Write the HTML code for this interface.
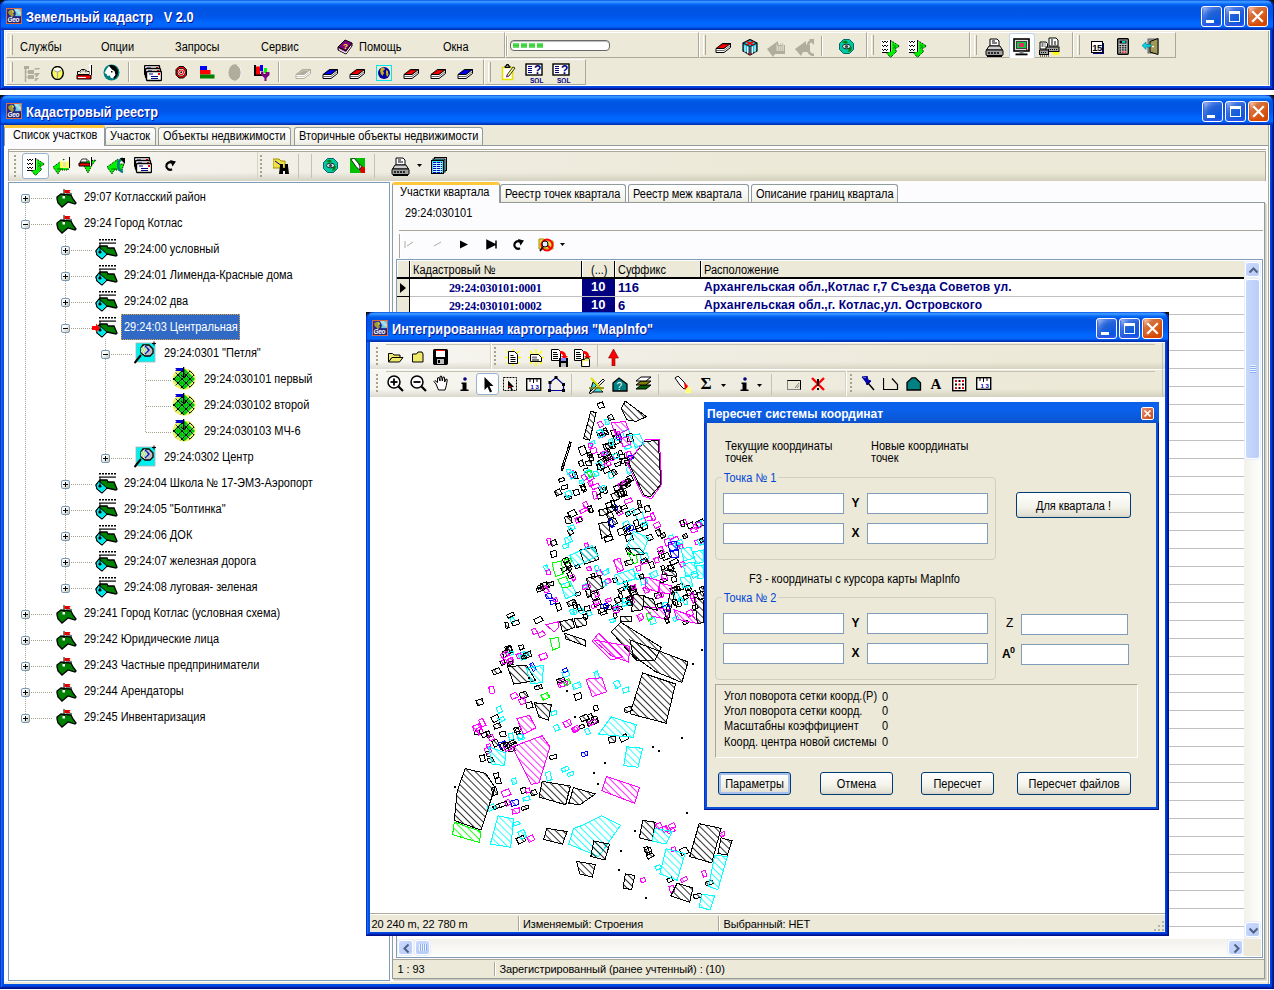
<!DOCTYPE html><html lang="ru"><head><meta charset="utf-8"><title>Земельный кадастр</title><style>
*{box-sizing:border-box;margin:0;padding:0}
html,body{width:1274px;height:990px;overflow:hidden;background:#fff}
body{position:relative;font-family:"Liberation Sans",sans-serif;font-size:12px;color:#000}
div,span,svg{position:absolute}
span{white-space:pre;line-height:14px}
.t{font-size:12.5px;letter-spacing:0;transform:scaleX(.88);transform-origin:0 0}
.n{font-size:12px;letter-spacing:0}
.th{font-size:11px;letter-spacing:-0.1px}
.win{background:#0054e3;border-radius:8px 8px 0 0;
 box-shadow:inset -1px -1px #00138c,inset 1px 1px #0831d9,inset -2px -2px #001ea0,inset 2px 2px #166aee,inset -3px -3px #003bda,inset 3px 3px #0855dd,inset -4px -4px #0046e0,inset 4px 4px #0050e6;}
.tb{left:0;top:0;right:0;height:30px;border-radius:8px 8px 0 0;
 background:linear-gradient(to bottom,#0046e0 0%,#3a95ff 4%,#3391ff 8%,#0a6dfb 13%,#0058e6 20%,#0054e3 30%,#0056e8 55%,#005ef5 65%,#0068ff 75%,#0066fc 88%,#0050e0 93%,#0038c0 96%,#002ea8 100%);
 box-shadow:inset 1px 0 #0831d9, inset -1px 0 #00138c}
.ttl{color:#fff;font-weight:bold;font-size:15px;letter-spacing:0;text-shadow:1px 1px #0f1089;line-height:16px;transform:scaleX(.85);transform-origin:0 0}
.cb{width:21px;height:21px;border:1px solid #fff;border-radius:3px;
 background:radial-gradient(circle at 90% 90%,#0054e9 0%,#2263d5 55%,#4479e4 70%,#a3bbec 90%,#fff 100%);
 box-shadow:inset 0 -1px 2px 1px #2f55e8}
.cb.x{background:radial-gradient(circle at 90% 90%,#cc4600 0%,#dc6527 55%,#cd7546 70%,#ffccb2 90%,#fff 100%);box-shadow:inset 0 -1px 2px 1px #da4600}
.bev{border:1px solid;border-color:#fff #aca899 #aca899 #fff}
.grip{width:3px;border-left:1px solid #fff;border-right:1px solid #aca899;background:#ece9d8}
.vsep{width:2px;border-left:1px solid #aca899;border-right:1px solid #fff}
.dgrip{width:3px;background-image:radial-gradient(circle at 1px 1px,#a5a28f 1px,transparent 1.2px);background-size:3px 4px}
.tab{border:1px solid #919b9c;border-bottom:none;border-radius:3px 3px 0 0;background:linear-gradient(#fff,#f3f3ee 80%,#ece9d8)}
.tab.on{background:#fcfcfe;border-top:3px solid #ffc73c;border-radius:3px 3px 0 0}
.inp{background:#fff;border:1px solid #7f9db9}
.btn{border:1px solid #003c74;border-radius:3px;background:linear-gradient(#fff 0%,#f3f2ea 60%,#e3e1d4 90%,#d6d0c5 100%)}
.btn span{left:0;right:0;text-align:center;transform-origin:50% 0}
</style></head><body><div style="left:0px;top:0px;width:6px;height:6px;background:#101010"></div><div style="left:1268px;top:0px;width:6px;height:6px;background:#101010"></div><div style="left:0px;top:95px;width:6px;height:6px;background:#101010"></div><div style="left:1268px;top:95px;width:6px;height:6px;background:#101010"></div><div class="win" style="left:0px;top:0px;width:1274px;height:90px;"><div class="tb"></div><svg style="left:6px;top:8px;" width="16" height="16" viewBox="0 0 16 16"><rect x="0" y="0" width="16" height="16" fill="#d86848"/><rect x="1" y="1" width="14" height="14" fill="#2838a8"/><rect x="8" y="1" width="7" height="7" fill="#70c8d8"/><path d="M9 1h3l1 2l2 1v3l-3-1l-1-2l-2-1z" fill="#a8e0e8"/><circle cx="5.500" cy="5.500" r="4.300" fill="#1c2890"/><path d="M3 2.500l3-1l2 1.500l-1 2l1 2l-2 2.500l-1.500-2l-1.500-1l-1-2z" fill="#a89830"/><path d="M6 2l2 1.500l-.5 1.500l-1.500-.5z" fill="#d8c848"/><rect x="1" y="9" width="14" height="6" fill="#202878"/><text x="1.500" y="14.200" font-family="Liberation Sans,sans-serif" font-size="6.500" font-weight="bold" font-style="italic" fill="#fff" letter-spacing="-.3">Geo</text></svg><span class="ttl" style="left:26px;top:9px;">Земельный кадастр   V 2.0</span><div class="cb" style="left:1201px;top:6px;width:21px;height:21px;"><div style="left:4px;top:13px;width:8px;height:3px;background:#fff"></div></div><div class="cb" style="left:1224px;top:6px;width:21px;height:21px;"><div style="left:4px;top:4px;width:11px;height:11px;border:1px solid #fff;border-top-width:3px"></div></div><div class="cb x" style="left:1247px;top:6px;width:21px;height:21px;"><svg style="left:0;top:0" width="19" height="19"><path d="M5 5L14 14M14 5L5 14" stroke="#fff" stroke-width="2.200" stroke-linecap="square"/></svg></div><div style="left:4px;top:30px;width:1266px;height:56px;background:#ece9d8;border-top:1px solid #fff;border-left:1px solid #fff;border-bottom:1px solid #fff;box-shadow:inset -1px 0 #fff,inset -2px 0 #aca899"></div><div class="bev" style="left:6px;top:32px;width:499px;height:26px;"></div><div class="grip" style="left:10px;top:35px;width:3px;height:20px;"></div><div class="bev" style="left:505px;top:32px;width:194px;height:26px;"></div><div class="vsep" style="left:506px;top:36px;width:2px;height:20px;"></div><div class="bev" style="left:699px;top:32px;width:168px;height:26px;"></div><div class="grip" style="left:703px;top:35px;width:3px;height:20px;"></div><div class="bev" style="left:867px;top:32px;width:103px;height:26px;"></div><div class="grip" style="left:871px;top:35px;width:3px;height:20px;"></div><div class="bev" style="left:970px;top:32px;width:103px;height:26px;"></div><div class="grip" style="left:974px;top:35px;width:3px;height:20px;"></div><div class="bev" style="left:1073px;top:32px;width:103px;height:26px;"></div><div class="grip" style="left:1077px;top:35px;width:3px;height:20px;"></div><span class="t" style="left:19.6px;top:40px;">Службы</span><span class="t" style="left:100.5px;top:40px;">Опции</span><span class="t" style="left:175px;top:40px;">Запросы</span><span class="t" style="left:261.3px;top:40px;">Сервис</span><span class="t" style="left:359.4px;top:40px;">Помощь</span><span class="t" style="left:443.4px;top:40px;">Окна</span><svg style="left:337px;top:39px;" width="16" height="16" viewBox="0 0 16 16"><path d="M1 8L8 1l7 3l-6 8z" fill="#800080" stroke="#000" stroke-width="1"/><path d="M1 8v3l8 4l6-8V4l-6 8z" fill="#c060c0" stroke="#000" stroke-width="1"/><path d="M2 10.500l7 3.500l5-7" stroke="#fff" stroke-width="1" fill="none"/><text x="6" y="9.500" font-family="Liberation Sans,sans-serif" font-weight="bold" font-size="8" fill="#ff0">?</text></svg><div style="left:510px;top:40px;width:100px;height:11px;"><div style="left:0;top:0;width:100px;height:11px;border:1px solid #686868;border-radius:4px;background:#fff;box-shadow:inset 0 1px 1px #bbb"></div><div style="left:3px;top:3px;width:6px;height:5px;background:linear-gradient(#7be47b,#2ed12e 50%,#7be47b)"></div><div style="left:11px;top:3px;width:6px;height:5px;background:linear-gradient(#7be47b,#2ed12e 50%,#7be47b)"></div><div style="left:19px;top:3px;width:6px;height:5px;background:linear-gradient(#7be47b,#2ed12e 50%,#7be47b)"></div><div style="left:27px;top:3px;width:6px;height:5px;background:linear-gradient(#7be47b,#2ed12e 50%,#7be47b)"></div></div><svg style="left:715px;top:42px;" width="17" height="12" viewBox="0 0 17 12"><path d="M1 6.500L7.500 1.500H15.500L9 6.500Z" fill="#ff0000" stroke="#000" stroke-width="1"/><path d="M1 6.500V10.500H9L15.500 5.500V1.500L9 6.500Z" fill="#fff" stroke="#000" stroke-width="1"/><path d="M1.500 8.500H9L15.500 3.500" fill="none" stroke="#000" stroke-width=".6"/><path d="M3.500 5.500L8 2.500H13.500" fill="none" stroke="#a80000" stroke-width="1"/></svg><svg style="left:742px;top:39px;" width="16" height="17" viewBox="0 0 16 17"><path d="M8 .5l7 3.500v8l-7 4l-7-4v-8z" fill="#00c8e8" stroke="#000" stroke-width="1.200"/><path d="M1 4l7 3.500l7-3.500M8 7.500V16" stroke="#000" stroke-width="1" fill="none"/><path d="M3 6.500v7M5.500 7.500v7M10.500 7.500v7M13 6.500v7" stroke="#fff" stroke-width="1"/><path d="M4.500 2.500l7 3.500M11.500 2.500l-7 3.500" stroke="#f00" stroke-width="1.500"/><path d="M8 7.500V16" stroke="#f00" stroke-width="1.500"/></svg><svg style="left:767px;top:38px;" width="20" height="19" viewBox="0 0 20 19"><path d="M0 11L11 3v4h7v9H8l-2 3z" fill="#b0ad9c"/><path d="M9 5l2 3h4l2-3v8H9z" fill="#d8d5c8"/><path d="M9 6h8M9 8h8M9 10h8M9 12h8" stroke="#b0ad9c" stroke-width="1" stroke-dasharray="1 1"/></svg><svg style="left:795px;top:38px;" width="20" height="19" viewBox="0 0 20 19"><path d="M0 11L11 3v4h4v7H8l-2 4z" fill="#b0ad9c"/><path d="M19 2A6.500 7.500 0 0 0 19 17" fill="none" stroke="#b0ad9c" stroke-width="2.600"/><path d="M14 1h5v6l-3-3z" fill="#b0ad9c"/></svg><div class="vsep" style="left:821px;top:36px;width:2px;height:20px;"></div><svg style="left:838.5px;top:39px;" width="15" height="15" viewBox="0 0 15 15"><path d="M4.500 .5h6l4 4v6l-4 4h-6l-4-4v-6z" fill="#00c8a0" stroke="#006868" stroke-width="1"/><path d="M3 3l4-1.500l2 2l-3 1zM10 9l3-1l-1 4l-3 1z" fill="#008000"/><ellipse cx="7.500" cy="7.500" rx="4" ry="2.300" fill="#c8f0f0" stroke="#000" stroke-width=".8"/><circle cx="7.500" cy="7.500" r="1.600" fill="#404040"/></svg><svg style="left:881px;top:38px;" width="20" height="20" viewBox="0 0 20 20"><rect x="0" y="2" width="9" height="12" fill="#fff"/><path d="M1 3.5h7" stroke="#000" stroke-width="1" stroke-dasharray="1 1 2 1"/><path d="M2 4.5h6" stroke="#000" stroke-width="1" stroke-dasharray="1 2"/><path d="M1 7.5h7" stroke="#000" stroke-width="1" stroke-dasharray="1 1 2 1"/><path d="M2 8.5h6" stroke="#000" stroke-width="1" stroke-dasharray="1 2"/><path d="M1 11.5h7" stroke="#000" stroke-width="1" stroke-dasharray="1 1 2 1"/><path d="M2 12.5h6" stroke="#000" stroke-width="1" stroke-dasharray="1 2"/><path d="M9.500 2v12M1 14.500h9" stroke="#000" stroke-width="1"/><path d="M10.500 3L18.500 8L13.500 11.500L16 13L9.500 19.500L5.500 15L10.500 13.500Z" fill="#00f000"/><path d="M10.500 3L18.500 8L13.500 11.500L16 13L9.500 19.500L5.500 15" fill="none" stroke="#000" stroke-width="1" stroke-dasharray="1 1"/><path d="M12 7l3 1.500l-3 2" stroke="#008000" stroke-width="1" fill="none"/></svg><svg style="left:908px;top:38px;" width="20" height="20" viewBox="0 0 20 20"><rect x="0" y="2" width="9" height="12" fill="#fff"/><path d="M1 3.5h7" stroke="#000" stroke-width="1" stroke-dasharray="1 1 2 1"/><path d="M2 4.5h6" stroke="#000" stroke-width="1" stroke-dasharray="1 2"/><path d="M1 7.5h7" stroke="#000" stroke-width="1" stroke-dasharray="1 1 2 1"/><path d="M2 8.5h6" stroke="#000" stroke-width="1" stroke-dasharray="1 2"/><path d="M1 11.5h7" stroke="#000" stroke-width="1" stroke-dasharray="1 1 2 1"/><path d="M2 12.5h6" stroke="#000" stroke-width="1" stroke-dasharray="1 2"/><path d="M9.500 2v12M1 14.500h9" stroke="#000" stroke-width="1"/><path d="M10.500 3L18.500 8L13.500 11.500L16 13L9.500 19.500L5.500 15L10.500 13.500Z" fill="#00f000"/><path d="M10.500 3L18.500 8L13.500 11.500L16 13L9.500 19.500L5.500 15" fill="none" stroke="#000" stroke-width="1" stroke-dasharray="1 1"/><path d="M12 7l3 1.500l-3 2" stroke="#008000" stroke-width="1" fill="none"/></svg><svg style="left:984.5px;top:38px;" width="19" height="19" viewBox="0 0 19 19"><path d="M5 1h7l2 2v5H5z" fill="#fff" stroke="#000" stroke-width="1"/><path d="M7 3h3M7 5h5" stroke="#000" stroke-width="1"/><path d="M1.500 12L4 8h11l2.500 4z" fill="#d0d0d0" stroke="#000" stroke-width="1"/><rect x="1" y="12" width="17" height="5.500" rx="1" fill="#a0a0a0" stroke="#000" stroke-width="1"/><path d="M3 15h11" stroke="#000" stroke-width="1.500" stroke-dasharray="2 1"/><path d="M2 18.500h15" stroke="#000" stroke-width="1"/></svg><div style="left:1009px;top:33px;width:26px;height:25px;background:#fff;border:1px solid #c1d2ee;border-bottom:none;border-radius:3px 3px 0 0"></div><svg style="left:1013px;top:38px;" width="17" height="18" viewBox="0 0 17 18"><rect x="1" y="1" width="15" height="12" fill="#e0e0e0" stroke="#000" stroke-width="1.600"/><rect x="3.500" y="3.500" width="10" height="7" fill="#00d040" stroke="#404040" stroke-width="1"/><rect x="6" y="5" width="5" height="4" fill="#e03060"/><rect x="6.500" y="13.500" width="4" height="2" fill="#808080"/><rect x="2.500" y="15.500" width="12" height="1.800" fill="#000"/><rect x="13" y="11" width="1.500" height="1" fill="#f00"/></svg><svg style="left:1039px;top:37px;" width="21" height="20" viewBox="0 0 21 20"><path d="M10 1h7l2 2v6h-9z" fill="#fff" stroke="#000" stroke-width="1"/><path d="M12 3h3M12 5h5M12 7h5" stroke="#000" stroke-width="1" stroke-dasharray="2 1"/><path d="M1 5h6l1.500 1.500V12H1z" fill="#fff" stroke="#000" stroke-width="1"/><path d="M2.500 7h4M2.500 9h4" stroke="#000" stroke-width="1" stroke-dasharray="2 1"/><rect x="7" y="10" width="13" height="4.500" fill="#a0a0a0" stroke="#000" stroke-width="1"/><path d="M9 12.500h9" stroke="#000" stroke-width="1" stroke-dasharray="1 1"/><rect x="0.500" y="13" width="9" height="4.500" fill="#a0a0a0" stroke="#000" stroke-width="1"/><path d="M2 15.500h6M1 19h9" stroke="#000" stroke-width="1" stroke-dasharray="1 1"/><path d="M13 15h7v4l-3-2l-2 2z" fill="#ffff00"/></svg><svg style="left:1091px;top:40.5px;" width="13" height="13" viewBox="0 0 13 13"><rect x="2" y="2" width="11" height="11" fill="#000080"/><rect x=".5" y=".5" width="11" height="11" fill="#fff" stroke="#000" stroke-width="1"/><text x="1.300" y="10" font-family="Liberation Sans,sans-serif" font-weight="bold" font-size="9.500" letter-spacing="-.6" fill="#000">15</text></svg><svg style="left:1117px;top:38px;" width="12" height="17" viewBox="0 0 12 17"><rect x=".7" y=".7" width="10.600" height="15.600" rx="1" fill="#c0c0c0" stroke="#000" stroke-width="1.400"/><rect x="2.500" y="2.500" width="7" height="3" fill="#000"/><rect x="5" y="3.200" width="3.500" height="1.500" fill="#0ff"/><rect x="2.5" y="7.0" width="1.600" height="1.200" fill="#000"/><rect x="5.1" y="7.0" width="1.600" height="1.200" fill="#000"/><rect x="7.7" y="7.0" width="1.600" height="1.200" fill="#000"/><rect x="2.5" y="9.2" width="1.600" height="1.200" fill="#000"/><rect x="5.1" y="9.2" width="1.600" height="1.200" fill="#000"/><rect x="7.7" y="9.2" width="1.600" height="1.200" fill="#000"/><rect x="2.5" y="11.4" width="1.600" height="1.200" fill="#000"/><rect x="5.1" y="11.4" width="1.600" height="1.200" fill="#000"/><rect x="7.7" y="11.4" width="1.600" height="1.200" fill="#000"/><rect x="2.5" y="13.600000000000001" width="1.600" height="1.200" fill="#000"/><rect x="5.1" y="13.600000000000001" width="1.600" height="1.200" fill="#f00"/><rect x="7.7" y="13.600000000000001" width="1.600" height="1.200" fill="#f00"/></svg><svg style="left:1142px;top:38px;" width="18" height="17" viewBox="0 0 18 17"><rect x="6" y="1" width="10" height="14" fill="#a0a0a0" stroke="#606060" stroke-width="1"/><path d="M8 3.500l8-3v16l-8-2.500z" fill="#a09858" stroke="#000" stroke-width="1"/><path d="M0 7.500l4-3.500v2.500h5v2.500H4v2.500z" fill="#00d8e8" stroke="#007080" stroke-width=".6"/><rect x="10" y="8" width="2" height="1.200" fill="#fff"/></svg><div class="bev" style="left:6px;top:59px;width:478px;height:26px;"></div><div class="grip" style="left:10px;top:62px;width:3px;height:20px;"></div><div class="bev" style="left:484px;top:59px;width:102px;height:26px;"></div><div class="grip" style="left:488px;top:62px;width:3px;height:20px;"></div><svg style="left:22.5px;top:65.5px;" width="18" height="17" viewBox="0 0 18 17"><path d="M2.5 1v15" stroke="#b0ad9c" stroke-width="1.5"/><rect x="1" y="0" width="5" height="3" fill="#b0ad9c"/><path d="M3 6h6M3 11h6" stroke="#b0ad9c" stroke-width="1"/><rect x="5" y="4" width="6" height="4" fill="#b0ad9c"/><rect x="5" y="9" width="6" height="4" fill="#b0ad9c"/><path d="M12 2h5l-1 1.5h-5zM12 7h5l-3 4h-2l1-2h-2zM12 12h4l-3 3h-2l1.500-1.500h-1z" fill="#b0ad9c"/></svg><svg style="left:50.5px;top:65.5px;" width="13" height="14" viewBox="0 0 13 14"><ellipse cx="6.500" cy="7" rx="5.800" ry="6.500" fill="#f8f860" stroke="#000" stroke-width="1.4"/><ellipse cx="6.500" cy="3.500" rx="3.800" ry="1.800" fill="#fff"/><path d="M3 4.500l3.500 1.500l3.500-1.500M6.500 6v6" stroke="#b0ad9c" stroke-width="1.200" fill="none"/></svg><svg style="left:75.5px;top:64px;" width="16" height="16" viewBox="0 0 16 16"><path d="M1 11h14v4H1z" fill="#f00" stroke="#000" stroke-width="1"/><rect x="2" y="13" width="8" height="1" fill="#fff"/><path d="M1.500 10.500V7.500h2l2-2h3l3 2h2v3z" fill="#ece9d8" stroke="#000" stroke-width="1"/><path d="M4 8.500l3-2l4 2" stroke="#000" stroke-width=".8" fill="none" stroke-dasharray="1 1"/><path d="M13 2l1.500-1.500V11" stroke="#fff" stroke-width="2" fill="none"/><path d="M15.500 1v10" stroke="#000" stroke-width="1"/></svg><svg style="left:102.5px;top:63.5px;" width="17" height="17" viewBox="0 0 17 17"><circle cx="8.500" cy="8.500" r="8" fill="#008080"/><path d="M6 1.500C10 0 15.500 3 15 9c-.5 3-2 5-4 6l-1-5l-3-4z" fill="#000"/><path d="M6 2l3 3.500l2.500 1.500l1 4l-3 3.500l-2-1l-.5-2l-2.500.5l-1-2l-2-1l1.500-3z" fill="#fff"/><rect x="8" y="7" width="1.500" height="1.500" fill="#000"/></svg><div class="vsep" style="left:128px;top:62px;width:2px;height:20px;"></div><svg style="left:144px;top:64.5px;" width="18" height="17" viewBox="0 0 18 17"><rect x="0.5" y="0.5" width="15" height="9" rx="1" fill="#fff" stroke="#000" stroke-width="1.4"/><rect x="3" y="2.5" width="4" height="1" fill="#000080"/><rect x="12" y="2" width="2" height="2" fill="#f00"/><rect x="1.5" y="3.5" width="15" height="9" rx="1" fill="#fff" stroke="#000" stroke-width="1.4"/><rect x="4" y="5.5" width="4" height="1" fill="#000080"/><rect x="13" y="5" width="2" height="2" fill="#f00"/><rect x="2.5" y="6.5" width="15" height="9" rx="1" fill="#fff" stroke="#000" stroke-width="1.4"/><rect x="5" y="8.5" width="4" height="1" fill="#000080"/><rect x="14" y="8" width="2" height="2" fill="#f00"/><rect x="7" y="11" width="7" height="1" fill="#000080"/><rect x="7" y="13" width="7" height="1" fill="#000080"/></svg><svg style="left:174.5px;top:66px;" width="13" height="13" viewBox="0 0 13 13"><path d="M4 .5h4.500l3 3v5.500l-3 3H4l-3-3V3.500z" fill="#f00" stroke="#000" stroke-width="1"/><circle cx="6.200" cy="6.200" r="4.300" fill="#000"/><circle cx="6.200" cy="6.200" r="3.500" fill="#fff"/><circle cx="6.200" cy="6.200" r="2.800" fill="#f00"/><circle cx="6.200" cy="6.200" r="1.800" fill="#fff"/><circle cx="6.200" cy="6.200" r="1" fill="#000"/></svg><svg style="left:199.7px;top:66.3px;" width="15" height="13" viewBox="0 0 15 13"><rect x="0" y="0" width="7" height="4" fill="#00f"/><rect x="0" y="4" width="10.500" height="4.500" fill="#f00"/><rect x="0" y="8.500" width="14.500" height="4" fill="#008000"/></svg><svg style="left:227.5px;top:64px;" width="15" height="18" viewBox="0 0 15 18"><ellipse cx="7" cy="8.500" rx="6.500" ry="8.300" fill="#b0ad9c"/><path d="M9 1a7 8.500 0 0 1 0 15.500" stroke="#fff" stroke-width="1" fill="none"/></svg><svg style="left:253.7px;top:64.7px;" width="16" height="17" viewBox="0 0 16 17"><rect x="0" y="0" width="2" height="10" fill="#000"/><rect x="0" y="9" width="12" height="2" fill="#000"/><rect x="2" y="1.500" width="4" height="8" fill="#f00"/><rect x="6" y="0" width="3" height="6" fill="#00f"/><rect x="10" y="3" width="3" height="5" fill="#0f0"/><path d="M7 6.500h2.500v3h2V7h4v3l-3 3v3h-2v-3l-3.500-3z" fill="#800080"/></svg><div class="vsep" style="left:278px;top:62px;width:2px;height:20px;"></div><svg style="left:295px;top:68px;" width="17" height="12" viewBox="0 0 17 12"><path d="M1 6.500L7.500 1.500H15.500L9 6.500Z" fill="#b0ad9c" stroke="#b0ad9c" stroke-width="1"/><path d="M1 6.500V10.500H9L15.500 5.500V1.500L9 6.500Z" fill="#fff" stroke="#b0ad9c" stroke-width="1"/><path d="M1.500 8.500H9L15.500 3.500" fill="none" stroke="#b0ad9c" stroke-width=".6"/><path d="M3.500 5.500L8 2.500H13.500" fill="none" stroke="#c8c5b8" stroke-width="1"/></svg><svg style="left:321.5px;top:68px;" width="17" height="12" viewBox="0 0 17 12"><path d="M1 6.500L7.500 1.500H15.500L9 6.500Z" fill="#0000ff" stroke="#000" stroke-width="1"/><path d="M1 6.500V10.500H9L15.500 5.500V1.500L9 6.500Z" fill="#fff" stroke="#000" stroke-width="1"/><path d="M1.500 8.500H9L15.500 3.500" fill="none" stroke="#000" stroke-width=".6"/><path d="M3.500 5.500L8 2.500H13.500" fill="none" stroke="#0000a8" stroke-width="1"/></svg><svg style="left:348.5px;top:68px;" width="17" height="12" viewBox="0 0 17 12"><path d="M1 6.500L7.500 1.500H15.500L9 6.500Z" fill="#ff0000" stroke="#000" stroke-width="1"/><path d="M1 6.500V10.500H9L15.500 5.500V1.500L9 6.500Z" fill="#fff" stroke="#000" stroke-width="1"/><path d="M1.500 8.500H9L15.500 3.500" fill="none" stroke="#000" stroke-width=".6"/><path d="M3.500 5.500L8 2.500H13.500" fill="none" stroke="#a80000" stroke-width="1"/></svg><svg style="left:402.5px;top:68px;" width="17" height="12" viewBox="0 0 17 12"><path d="M1 6.500L7.500 1.500H15.500L9 6.500Z" fill="#ff0000" stroke="#000" stroke-width="1"/><path d="M1 6.500V10.500H9L15.500 5.500V1.500L9 6.500Z" fill="#fff" stroke="#000" stroke-width="1"/><path d="M1.500 8.500H9L15.500 3.500" fill="none" stroke="#000" stroke-width=".6"/><path d="M3.500 5.500L8 2.500H13.500" fill="none" stroke="#a80000" stroke-width="1"/></svg><svg style="left:429.5px;top:68px;" width="17" height="12" viewBox="0 0 17 12"><path d="M1 6.500L7.500 1.500H15.500L9 6.500Z" fill="#ff0000" stroke="#000" stroke-width="1"/><path d="M1 6.500V10.500H9L15.500 5.500V1.500L9 6.500Z" fill="#fff" stroke="#000" stroke-width="1"/><path d="M1.500 8.500H9L15.500 3.500" fill="none" stroke="#000" stroke-width=".6"/><path d="M3.500 5.500L8 2.500H13.500" fill="none" stroke="#a80000" stroke-width="1"/></svg><svg style="left:456.5px;top:68px;" width="17" height="12" viewBox="0 0 17 12"><path d="M1 6.500L7.500 1.500H15.500L9 6.500Z" fill="#0000ff" stroke="#000" stroke-width="1"/><path d="M1 6.500V10.500H9L15.500 5.500V1.500L9 6.500Z" fill="#fff" stroke="#000" stroke-width="1"/><path d="M1.500 8.500H9L15.500 3.500" fill="none" stroke="#000" stroke-width=".6"/><path d="M3.500 5.500L8 2.500H13.500" fill="none" stroke="#0000a8" stroke-width="1"/></svg><svg style="left:376px;top:65px;" width="16" height="16" viewBox="0 0 16 16"><rect x=".5" y=".5" width="15" height="15" fill="#ece9d8" stroke="#00e8e8" stroke-width="1"/><circle cx="8" cy="8" r="6" fill="#0000a0"/><path d="M5 3l3-.5l1 2l-2 1.500l1 2l-1.500 3l-1.500-2l-1-3zM10 5l2 1l.5 4l-1.500 2l-1-3z" fill="#c8b020"/></svg><svg style="left:500.5px;top:64px;" width="15" height="17" viewBox="0 0 15 17"><path d="M1.500 3.500h10v12h-10z" fill="#fff" stroke="#e8e000" stroke-width="1.600"/><path d="M4 3.500V2h1.500V.5h2V2H9v1.500z" fill="#808080" stroke="#000" stroke-width="1"/><path d="M6 11l6-8l2 1l-6 8l-2.500 1z" fill="#ffff80" stroke="#000" stroke-width=".8"/><path d="M5.500 13l2-1l-1.200-1z" fill="#f0f"/></svg><svg style="left:525px;top:63px;" width="19" height="20" viewBox="0 0 19 20"><rect x="1" y="1" width="16" height="11" fill="#fff" stroke="#000" stroke-width="1.400"/><path d="M3 3.5h4" stroke="#000080" stroke-width="1"/><path d="M3 5.5h4" stroke="#000080" stroke-width="1"/><path d="M3 7.5h4" stroke="#000080" stroke-width="1"/><path d="M3 9.5h4" stroke="#000080" stroke-width="1"/><text x="9" y="11" font-family="Liberation Sans,sans-serif" font-weight="bold" font-size="12" fill="#000080">?</text><text x="5" y="19.500" font-family="Liberation Sans,sans-serif" font-weight="bold" font-size="6.500" fill="#000080">SQL</text></svg><svg style="left:552px;top:63px;" width="19" height="20" viewBox="0 0 19 20"><rect x="1" y="1" width="16" height="11" fill="#fff" stroke="#000" stroke-width="1.400"/><path d="M3 3.5h4" stroke="#000080" stroke-width="1"/><path d="M3 5.5h4" stroke="#000080" stroke-width="1"/><path d="M3 7.5h4" stroke="#000080" stroke-width="1"/><path d="M3 9.5h4" stroke="#000080" stroke-width="1"/><text x="9" y="11" font-family="Liberation Sans,sans-serif" font-weight="bold" font-size="12" fill="#000080">?</text><text x="5" y="19.500" font-family="Liberation Sans,sans-serif" font-weight="bold" font-size="6.500" fill="#000080">SQL</text></svg></div><div class="win" style="left:0px;top:95px;width:1274px;height:894px;"><div class="tb"></div><svg style="left:6px;top:8px;" width="16" height="16" viewBox="0 0 16 16"><rect x="0" y="0" width="16" height="16" fill="#d86848"/><rect x="1" y="1" width="14" height="14" fill="#2838a8"/><rect x="8" y="1" width="7" height="7" fill="#70c8d8"/><path d="M9 1h3l1 2l2 1v3l-3-1l-1-2l-2-1z" fill="#a8e0e8"/><circle cx="5.500" cy="5.500" r="4.300" fill="#1c2890"/><path d="M3 2.500l3-1l2 1.500l-1 2l1 2l-2 2.500l-1.500-2l-1.500-1l-1-2z" fill="#a89830"/><path d="M6 2l2 1.500l-.5 1.500l-1.500-.5z" fill="#d8c848"/><rect x="1" y="9" width="14" height="6" fill="#202878"/><text x="1.500" y="14.200" font-family="Liberation Sans,sans-serif" font-size="6.500" font-weight="bold" font-style="italic" fill="#fff" letter-spacing="-.3">Geo</text></svg><span class="ttl" style="left:26px;top:9px;">Кадастровый реестр</span><div class="cb" style="left:1202px;top:6px;width:21px;height:21px;"><div style="left:4px;top:13px;width:8px;height:3px;background:#fff"></div></div><div class="cb" style="left:1225px;top:6px;width:21px;height:21px;"><div style="left:4px;top:4px;width:11px;height:11px;border:1px solid #fff;border-top-width:3px"></div></div><div class="cb x" style="left:1248px;top:6px;width:21px;height:21px;"><svg style="left:0;top:0" width="19" height="19"><path d="M5 5L14 14M14 5L5 14" stroke="#fff" stroke-width="2.200" stroke-linecap="square"/></svg></div><div style="left:4px;top:30px;width:1266px;height:859px;background:#ece9d8;box-shadow:inset -1px 0 #fff,inset -2px 0 #aca899,inset 0 -2px #ece9d8,inset 0 -3px #8c8c84"></div><div style="left:4px;top:50px;width:1264px;height:837px;background:#fcfcfe;border-top:1px solid #919b9c"></div><div class="tab on" style="left:4px;top:30px;width:101px;height:21px;"></div><span class="t" style="left:12.5px;top:32.5px;">Список участков</span><div class="tab" style="left:105px;top:32px;width:51px;height:18px;"></div><span class="t" style="left:110px;top:34px;">Участок</span><div class="tab" style="left:158px;top:32px;width:133px;height:18px;"></div><span class="t" style="left:163px;top:34px;">Объекты недвижимости</span><div class="tab" style="left:294px;top:32px;width:189px;height:18px;"></div><span class="t" style="left:299px;top:34px;">Вторичные объекты недвижимости</span><div style="left:8px;top:54px;width:1258px;height:32px;border-top:1px solid #aca899;border-left:1px solid #aca899;background:#fff"></div><div style="left:9px;top:56px;width:1257px;height:30px;border-top:1px solid #aca899;background:linear-gradient(to bottom,rgba(255,255,255,0) 70%,rgba(150,145,120,.3) 100%),linear-gradient(to right,#f7f6f1,#efede2 30%,#ece9d8 60%);border-right:1px solid #aca899"></div><div class="dgrip" style="left:14px;top:60px;width:3px;height:22px;"></div><div class="dgrip" style="left:260px;top:60px;width:3px;height:22px;"></div><div style="left:257px;top:57px;width:1px;height:27px;background:#d8d5c6"></div><div style="left:22px;top:58px;width:27px;height:26px;background:#fff;border:1px solid #98b0d0;border-radius:3px"></div><svg style="left:26px;top:61px;" width="20" height="20" viewBox="0 0 20 20"><rect x="0" y="2" width="9" height="12" fill="#fff"/><path d="M1 3.5h7" stroke="#000" stroke-width="1" stroke-dasharray="1 1 2 1"/><path d="M2 4.5h6" stroke="#000" stroke-width="1" stroke-dasharray="1 2"/><path d="M1 7.5h7" stroke="#000" stroke-width="1" stroke-dasharray="1 1 2 1"/><path d="M2 8.5h6" stroke="#000" stroke-width="1" stroke-dasharray="1 2"/><path d="M1 11.5h7" stroke="#000" stroke-width="1" stroke-dasharray="1 1 2 1"/><path d="M2 12.5h6" stroke="#000" stroke-width="1" stroke-dasharray="1 2"/><path d="M9.500 2v12M1 14.500h9" stroke="#000" stroke-width="1"/><path d="M10.500 3L18.500 8L13.500 11.500L16 13L9.500 19.500L5.500 15L10.500 13.500Z" fill="#00f000"/><path d="M10.500 3L18.500 8L13.500 11.500L16 13L9.500 19.500L5.500 15" fill="none" stroke="#000" stroke-width="1" stroke-dasharray="1 1"/><path d="M12 7l3 1.500l-3 2" stroke="#008000" stroke-width="1" fill="none"/></svg><svg style="left:52px;top:61px;" width="20" height="20" viewBox="0 0 20 20"><path d="M1 11L12 3L12 8L18 8L16 14L8 14L6 18Z" fill="#00f000"/><path d="M1 11L12 3L12 8L18 8L16 14L8 14L6 18Z" fill="none" stroke="#000" stroke-width="1" stroke-dasharray="1 1"/><path d="M5 13h6" stroke="#007000" stroke-width="1" fill="none"/><path d="M8 2L10 5H15L17 2V12H8Z" fill="#ffff60"/><path d="M8 2L10 5H15L17 2" fill="none" stroke="#fff" stroke-width="1.5"/><path d="M17.5 1v11" stroke="#000" stroke-width="1"/><rect x="11" y="6" width="3" height="5" fill="#e8e8a0"/></svg><svg style="left:78px;top:60px;" width="20" height="20" viewBox="0 0 20 20"><path d="M2 7L18 5L14 10L10 18L6 11Z" fill="#00f000"/><path d="M2 7L18 5L14 10L10 18L6 11Z" fill="none" stroke="#000" stroke-width="1" stroke-dasharray="1 1"/><path d="M1 8h11v3H1z" fill="#f00" stroke="#000" stroke-width="1"/><path d="M2 7h7V4h-5z" fill="#fff" stroke="#000" stroke-width=".8"/><path d="M11 1l2 2v8" fill="none" stroke="#fff" stroke-width="2"/><path d="M13.5 2v9" stroke="#000" stroke-width="1"/></svg><svg style="left:106px;top:61px;" width="21" height="20" viewBox="0 0 21 20"><path d="M1 11L12 3L12 8L18 8L16 14L8 14L6 18Z" fill="#00f000"/><path d="M1 11L12 3L12 8L18 8L16 14L8 14L6 18Z" fill="none" stroke="#000" stroke-width="1" stroke-dasharray="1 1"/><path d="M5 13h6" stroke="#007000" stroke-width="1" fill="none"/><path d="M17 2.5A6.5 7 0 0 0 17 16" fill="none" stroke="#008080" stroke-width="2.6"/><path d="M14 2h5v6l-3-3z" fill="#000"/></svg><svg style="left:133.5px;top:62px;" width="18" height="17" viewBox="0 0 18 17"><rect x="0.5" y="0.5" width="15" height="9" rx="1" fill="#fff" stroke="#000" stroke-width="1.4"/><rect x="3" y="2.5" width="4" height="1" fill="#000080"/><rect x="12" y="2" width="2" height="2" fill="#f00"/><rect x="1.5" y="3.5" width="15" height="9" rx="1" fill="#fff" stroke="#000" stroke-width="1.4"/><rect x="4" y="5.5" width="4" height="1" fill="#000080"/><rect x="13" y="5" width="2" height="2" fill="#f00"/><rect x="2.5" y="6.5" width="15" height="9" rx="1" fill="#fff" stroke="#000" stroke-width="1.4"/><rect x="5" y="8.5" width="4" height="1" fill="#000080"/><rect x="14" y="8" width="2" height="2" fill="#f00"/><rect x="7" y="11" width="7" height="1" fill="#000080"/><rect x="7" y="13" width="7" height="1" fill="#000080"/></svg><svg style="left:164px;top:65px;" width="12" height="11" viewBox="0 0 12 11"><path d="M8 9.300A3.800 3.800 0 1 1 8 2.700" fill="none" stroke="#000" stroke-width="2.200"/><path d="M6 0L12 1.500L8.500 6.500Z" fill="#000"/></svg><svg style="left:273px;top:63px;" width="17" height="17" viewBox="0 0 17 17"><path d="M0 1h6l2 2h4v7H0z" fill="#f0e040" stroke="#a09000" stroke-width="1"/><path d="M2 3l7 5" stroke="#0000a0" stroke-width="1"/><path d="M7 8h3v2h2v-2h3l1 8h-4v-3h-2v3H6z" fill="#000"/><rect x="7" y="6" width="3" height="2" fill="#000"/><rect x="12" y="6" width="3" height="2" fill="#000"/></svg><div style="left:298px;top:59px;width:1px;height:24px;background:#c5c2b2"></div><div style="left:311px;top:59px;width:1px;height:24px;background:#c5c2b2"></div><svg style="left:322.5px;top:62.5px;" width="15" height="15" viewBox="0 0 15 15"><path d="M4.500 .5h6l4 4v6l-4 4h-6l-4-4v-6z" fill="#00c8a0" stroke="#006868" stroke-width="1"/><path d="M3 3l4-1.500l2 2l-3 1zM10 9l3-1l-1 4l-3 1z" fill="#008000"/><ellipse cx="7.500" cy="7.500" rx="4" ry="2.300" fill="#c8f0f0" stroke="#000" stroke-width=".8"/><circle cx="7.500" cy="7.500" r="1.600" fill="#404040"/></svg><svg style="left:349.5px;top:62.5px;" width="15" height="15" viewBox="0 0 15 15"><rect x="0" y="0" width="15" height="15" fill="#00c000"/><path d="M8 7L15 9.500V15H11z" fill="#e00000"/><path d="M1 1.500l3-1.500l5 6l2 4l-2 1.500l-3-3z" fill="#fff" stroke="#000" stroke-width=".8"/><path d="M9 6l3 2l-2 3.500z" fill="#c0c0c0" stroke="#000" stroke-width=".6"/></svg><div style="left:374px;top:59px;width:1px;height:24px;background:#c5c2b2"></div><svg style="left:390.5px;top:62px;" width="19" height="19" viewBox="0 0 19 19"><path d="M5 1h7l2 2v5H5z" fill="#fff" stroke="#000" stroke-width="1"/><path d="M7 3h3M7 5h5" stroke="#000" stroke-width="1"/><path d="M1.500 12L4 8h11l2.500 4z" fill="#d0d0d0" stroke="#000" stroke-width="1"/><rect x="1" y="12" width="17" height="5.500" rx="1" fill="#a0a0a0" stroke="#000" stroke-width="1"/><path d="M3 15h11" stroke="#000" stroke-width="1.500" stroke-dasharray="2 1"/><path d="M2 18.500h15" stroke="#000" stroke-width="1"/></svg><svg style="left:416.5px;top:69px;" width="5" height="3" viewBox="0 0 5 3"><path d="M0 0h5L2.500 3z" fill="#000"/></svg><svg style="left:430.5px;top:62px;" width="16" height="17" viewBox="0 0 16 17"><rect x="3.500" y=".5" width="12" height="13" fill="#fff" stroke="#000" stroke-width="1"/><rect x="2" y="2" width="12" height="13" fill="#40e0f0" stroke="#000" stroke-width="1"/><rect x=".5" y="3.500" width="12" height="13" fill="#40e0f0" stroke="#000" stroke-width="1"/><path d="M2 5.500h9M2 7.500h9M2 9.500h9M2 11.500h9M2 13.500h9M2 15.500h9" stroke="#0000c0" stroke-width="1" stroke-dasharray="3 1"/><path d="M2 6.500h9M2 8.500h9M2 10.500h9M2 12.500h9M2 14.500h9" stroke="#c8ffff" stroke-width="1"/></svg><div style="left:8px;top:87px;width:382px;height:799px;background:#fff;border:1px solid #7f9db9"></div><div style="left:25px;top:108px;height:511px;background-image:linear-gradient(to bottom,#a5a28f 1px,transparent 1px);background-size:1px 2px;width:1px;"></div><div style="left:65px;top:140px;height:349px;background-image:linear-gradient(to bottom,#a5a28f 1px,transparent 1px);background-size:1px 2px;width:1px;"></div><div style="left:105px;top:244px;height:115px;background-image:linear-gradient(to bottom,#a5a28f 1px,transparent 1px);background-size:1px 2px;width:1px;"></div><div style="left:145px;top:270px;height:68px;background-image:linear-gradient(to bottom,#a5a28f 1px,transparent 1px);background-size:1px 2px;width:1px;"></div><div style="left:31px;top:103px;width:21px;background-image:linear-gradient(to right,#a5a28f 1px,transparent 1px);background-size:2px 1px;height:1px;"></div><div style="left:21px;top:99px;width:9px;height:9px;border:1px solid #7898b5;border-radius:2px;background:linear-gradient(135deg,#fff 30%,#c8c4b4)"><div style="left:1px;top:3px;width:5px;height:1px;background:#000"></div><div style="left:3px;top:1px;width:1px;height:5px;background:#000"></div></div><svg style="left:55px;top:93.5px;" width="23" height="20" viewBox="0 0 23 20"><path d="M2 8l4-3l10 1l2 4l3 4l-1 1l-7-2l-6 5l-4-4l-1-4z" fill="#008000" stroke="#000" stroke-width="1.300"/><rect x="8.500" y="0" width="1" height="9" fill="#000"/><path d="M9.500 1h6l-1 1.500l1 1.500h-6z" fill="#e00000"/><rect x="11" y="4.500" width="6" height="1" fill="#000"/><rect x="7.500" y="7" width="2.500" height="2.500" fill="#fff"/><rect x="5" y="0" width="0" height="0"/></svg><span class="t" style="left:84px;top:95.0px;">29:07 Котласский район</span><div style="left:31px;top:129px;width:21px;background-image:linear-gradient(to right,#a5a28f 1px,transparent 1px);background-size:2px 1px;height:1px;"></div><div style="left:21px;top:125px;width:9px;height:9px;border:1px solid #7898b5;border-radius:2px;background:linear-gradient(135deg,#fff 30%,#c8c4b4)"><div style="left:1px;top:3px;width:5px;height:1px;background:#000"></div></div><svg style="left:55px;top:119.5px;" width="23" height="20" viewBox="0 0 23 20"><path d="M2 8l4-3l10 1l2 4l3 4l-1 1l-7-2l-6 5l-4-4l-1-4z" fill="#008000" stroke="#000" stroke-width="1.300"/><rect x="8.500" y="0" width="1" height="9" fill="#000"/><path d="M9.500 1h6l-1 1.500l1 1.500h-6z" fill="#e00000"/><rect x="11" y="4.500" width="6" height="1" fill="#000"/><rect x="7.500" y="7" width="2.500" height="2.500" fill="#fff"/><rect x="5" y="0" width="0" height="0"/></svg><span class="t" style="left:84px;top:121.0px;">29:24 Город Котлас</span><div style="left:71px;top:155px;width:21px;background-image:linear-gradient(to right,#a5a28f 1px,transparent 1px);background-size:2px 1px;height:1px;"></div><div style="left:61px;top:151px;width:9px;height:9px;border:1px solid #7898b5;border-radius:2px;background:linear-gradient(135deg,#fff 30%,#c8c4b4)"><div style="left:1px;top:3px;width:5px;height:1px;background:#000"></div><div style="left:3px;top:1px;width:1px;height:5px;background:#000"></div></div><svg style="left:95px;top:143.5px;overflow:visible" width="24" height="22" viewBox="0 0 24 22"><rect x="4" y="0" width="2" height="1.500" fill="#000"/><rect x="7" y="0" width="2" height="1.500" fill="#000"/><rect x="10" y="0" width="2" height="1.500" fill="#000"/><rect x="13" y="0" width="2" height="1.500" fill="#000"/><rect x="16" y="0" width="2" height="1.500" fill="#000"/><rect x="19" y="0" width="2" height="1.500" fill="#000"/><rect x="4" y="3.500" width="17" height="1.200" fill="#000"/><path d="M5 7h7l1 2h6l3 7l-1 1l-9-2l-5 5l-5-4l-1-4z" fill="#008000" stroke="#000" stroke-width="1.300"/><path d="M4 8l8 7l-5 5l-5-4l-1-4z" fill="#00e8e8" stroke="#000" stroke-width="1"/><rect x="4.500" y="4" width="1" height="9" fill="#000"/><circle cx="5" cy="13" r="1.600" fill="#000"/></svg><span class="t" style="left:124px;top:147.0px;">29:24:00 условный</span><div style="left:71px;top:181px;width:21px;background-image:linear-gradient(to right,#a5a28f 1px,transparent 1px);background-size:2px 1px;height:1px;"></div><div style="left:61px;top:177px;width:9px;height:9px;border:1px solid #7898b5;border-radius:2px;background:linear-gradient(135deg,#fff 30%,#c8c4b4)"><div style="left:1px;top:3px;width:5px;height:1px;background:#000"></div><div style="left:3px;top:1px;width:1px;height:5px;background:#000"></div></div><svg style="left:95px;top:169.5px;overflow:visible" width="24" height="22" viewBox="0 0 24 22"><rect x="4" y="0" width="2" height="1.500" fill="#000"/><rect x="7" y="0" width="2" height="1.500" fill="#000"/><rect x="10" y="0" width="2" height="1.500" fill="#000"/><rect x="13" y="0" width="2" height="1.500" fill="#000"/><rect x="16" y="0" width="2" height="1.500" fill="#000"/><rect x="19" y="0" width="2" height="1.500" fill="#000"/><rect x="4" y="3.500" width="17" height="1.200" fill="#000"/><path d="M5 7h7l1 2h6l3 7l-1 1l-9-2l-5 5l-5-4l-1-4z" fill="#008000" stroke="#000" stroke-width="1.300"/><path d="M4 8l8 7l-5 5l-5-4l-1-4z" fill="#00e8e8" stroke="#000" stroke-width="1"/><rect x="4.500" y="4" width="1" height="9" fill="#000"/><circle cx="5" cy="13" r="1.600" fill="#000"/></svg><span class="t" style="left:124px;top:173.0px;">29:24:01 Лименда-Красные дома</span><div style="left:71px;top:207px;width:21px;background-image:linear-gradient(to right,#a5a28f 1px,transparent 1px);background-size:2px 1px;height:1px;"></div><div style="left:61px;top:203px;width:9px;height:9px;border:1px solid #7898b5;border-radius:2px;background:linear-gradient(135deg,#fff 30%,#c8c4b4)"><div style="left:1px;top:3px;width:5px;height:1px;background:#000"></div><div style="left:3px;top:1px;width:1px;height:5px;background:#000"></div></div><svg style="left:95px;top:195.5px;overflow:visible" width="24" height="22" viewBox="0 0 24 22"><rect x="4" y="0" width="2" height="1.500" fill="#000"/><rect x="7" y="0" width="2" height="1.500" fill="#000"/><rect x="10" y="0" width="2" height="1.500" fill="#000"/><rect x="13" y="0" width="2" height="1.500" fill="#000"/><rect x="16" y="0" width="2" height="1.500" fill="#000"/><rect x="19" y="0" width="2" height="1.500" fill="#000"/><rect x="4" y="3.500" width="17" height="1.200" fill="#000"/><path d="M5 7h7l1 2h6l3 7l-1 1l-9-2l-5 5l-5-4l-1-4z" fill="#008000" stroke="#000" stroke-width="1.300"/><path d="M4 8l8 7l-5 5l-5-4l-1-4z" fill="#00e8e8" stroke="#000" stroke-width="1"/><rect x="4.500" y="4" width="1" height="9" fill="#000"/><circle cx="5" cy="13" r="1.600" fill="#000"/></svg><span class="t" style="left:124px;top:199.0px;">29:24:02 два</span><div style="left:71px;top:233px;width:21px;background-image:linear-gradient(to right,#a5a28f 1px,transparent 1px);background-size:2px 1px;height:1px;"></div><div style="left:61px;top:229px;width:9px;height:9px;border:1px solid #7898b5;border-radius:2px;background:linear-gradient(135deg,#fff 30%,#c8c4b4)"><div style="left:1px;top:3px;width:5px;height:1px;background:#000"></div></div><svg style="left:95px;top:221.5px;overflow:visible" width="24" height="22" viewBox="0 0 24 22"><rect x="4" y="0" width="2" height="1.500" fill="#000"/><rect x="7" y="0" width="2" height="1.500" fill="#000"/><rect x="10" y="0" width="2" height="1.500" fill="#000"/><rect x="13" y="0" width="2" height="1.500" fill="#000"/><rect x="16" y="0" width="2" height="1.500" fill="#000"/><rect x="19" y="0" width="2" height="1.500" fill="#000"/><rect x="4" y="3.500" width="17" height="1.200" fill="#000"/><path d="M5 7h7l1 2h6l3 7l-1 1l-9-2l-5 5l-5-4l-1-4z" fill="#008000" stroke="#000" stroke-width="1.300"/><path d="M4 8l8 7l-5 5l-5-4l-1-4z" fill="#00e8e8" stroke="#000" stroke-width="1"/><rect x="4.500" y="4" width="1" height="9" fill="#000"/><circle cx="5" cy="13" r="1.600" fill="#000"/><path d="M-3 9h4V6.500l4 4.500l-4 4.500V13h-4z" fill="#f00"/></svg><div style="left:121px;top:219px;width:119px;height:26px;background:#316ac5;border:1px dotted #e0a040"></div><span class="t" style="left:124px;top:225.0px;color:#fff">29:24:03 Центральная</span><div style="left:111px;top:259px;width:21px;background-image:linear-gradient(to right,#a5a28f 1px,transparent 1px);background-size:2px 1px;height:1px;"></div><div style="left:101px;top:255px;width:9px;height:9px;border:1px solid #7898b5;border-radius:2px;background:linear-gradient(135deg,#fff 30%,#c8c4b4)"><div style="left:1px;top:3px;width:5px;height:1px;background:#000"></div></div><svg style="left:134px;top:245.5px;" width="23" height="23" viewBox="0 0 23 23"><rect x="2" y="2" width="19" height="19" fill="#00f0f0" stroke="#b0b0b0" stroke-width=".8"/><path d="M18 2.500h4M20 .5v4" stroke="#000" stroke-width="1"/><path d="M9 4h6l4 4v4l-3 3h-5l-4-3V7z" fill="#c0c0c0" stroke="#000" stroke-width="1.300"/><path d="M7 7l4-3l3 5l-3 5l-4-3z" fill="#f0f0a0"/><path d="M11 5l4 4l-4 4" stroke="#0000e0" stroke-width="1.300" fill="none"/><path d="M8 7h5M7 9h6M8 11h5" stroke="#00c8c8" stroke-width=".8" stroke-dasharray="1 1"/><path d="M7 14l-6.500 8" stroke="#000" stroke-width="2"/></svg><span class="t" style="left:164px;top:251.0px;">29:24:0301 "Петля"</span><div style="left:146px;top:285px;width:26px;background-image:linear-gradient(to right,#a5a28f 1px,transparent 1px);background-size:2px 1px;height:1px;"></div><svg style="left:172px;top:272.0px;" width="24" height="24" viewBox="0 0 24 24"><defs><clipPath id="pc7"><ellipse cx="12" cy="12" rx="11" ry="10"/></clipPath></defs><ellipse cx="12" cy="12" rx="11.500" ry="10.500" fill="#f0f060"/><g clip-path="url(#pc7)"><path d="M12 1L23 12L12 23L1 12Z" fill="#00c800"/><path d="M-2 8L16 26M2 4L20 22M6 0L24 18M10 -4L28 14M-2 16L16 -2M2 20L20 2M6 24L24 6M10 28L28 10" stroke="#000" stroke-width="1"/><path d="M2 6h20M2 10h20M2 14h20M2 18h20" stroke="#80e0ff" stroke-width=".6" stroke-dasharray="1 1"/></g><rect x="11" y="0" width="1.300" height="10" fill="#000"/><path d="M3 1h8v3H3l1.500-1.500z" fill="#0000d0"/><path d="M9 8l3 3l3-3" stroke="#000" stroke-width="1" fill="none"/></svg><span class="t" style="left:204px;top:277.0px;">29:24:030101 первый</span><div style="left:146px;top:311px;width:26px;background-image:linear-gradient(to right,#a5a28f 1px,transparent 1px);background-size:2px 1px;height:1px;"></div><svg style="left:172px;top:298.0px;" width="24" height="24" viewBox="0 0 24 24"><defs><clipPath id="pc8"><ellipse cx="12" cy="12" rx="11" ry="10"/></clipPath></defs><ellipse cx="12" cy="12" rx="11.500" ry="10.500" fill="#f0f060"/><g clip-path="url(#pc8)"><path d="M12 1L23 12L12 23L1 12Z" fill="#00c800"/><path d="M-2 8L16 26M2 4L20 22M6 0L24 18M10 -4L28 14M-2 16L16 -2M2 20L20 2M6 24L24 6M10 28L28 10" stroke="#000" stroke-width="1"/><path d="M2 6h20M2 10h20M2 14h20M2 18h20" stroke="#80e0ff" stroke-width=".6" stroke-dasharray="1 1"/></g><rect x="11" y="0" width="1.300" height="10" fill="#000"/><path d="M3 1h8v3H3l1.500-1.500z" fill="#0000d0"/><path d="M9 8l3 3l3-3" stroke="#000" stroke-width="1" fill="none"/></svg><span class="t" style="left:204px;top:303.0px;">29:24:030102 второй</span><div style="left:146px;top:337px;width:26px;background-image:linear-gradient(to right,#a5a28f 1px,transparent 1px);background-size:2px 1px;height:1px;"></div><svg style="left:172px;top:324.0px;" width="24" height="24" viewBox="0 0 24 24"><defs><clipPath id="pc9"><ellipse cx="12" cy="12" rx="11" ry="10"/></clipPath></defs><ellipse cx="12" cy="12" rx="11.500" ry="10.500" fill="#f0f060"/><g clip-path="url(#pc9)"><path d="M12 1L23 12L12 23L1 12Z" fill="#00c800"/><path d="M-2 8L16 26M2 4L20 22M6 0L24 18M10 -4L28 14M-2 16L16 -2M2 20L20 2M6 24L24 6M10 28L28 10" stroke="#000" stroke-width="1"/><path d="M2 6h20M2 10h20M2 14h20M2 18h20" stroke="#80e0ff" stroke-width=".6" stroke-dasharray="1 1"/></g><rect x="11" y="0" width="1.300" height="10" fill="#000"/><path d="M3 1h8v3H3l1.500-1.500z" fill="#0000d0"/><path d="M9 8l3 3l3-3" stroke="#000" stroke-width="1" fill="none"/></svg><span class="t" style="left:204px;top:329.0px;">29:24:030103 МЧ-6</span><div style="left:111px;top:363px;width:21px;background-image:linear-gradient(to right,#a5a28f 1px,transparent 1px);background-size:2px 1px;height:1px;"></div><div style="left:101px;top:359px;width:9px;height:9px;border:1px solid #7898b5;border-radius:2px;background:linear-gradient(135deg,#fff 30%,#c8c4b4)"><div style="left:1px;top:3px;width:5px;height:1px;background:#000"></div><div style="left:3px;top:1px;width:1px;height:5px;background:#000"></div></div><svg style="left:134px;top:349.5px;" width="23" height="23" viewBox="0 0 23 23"><rect x="2" y="2" width="19" height="19" fill="#00f0f0" stroke="#b0b0b0" stroke-width=".8"/><path d="M18 2.500h4M20 .5v4" stroke="#000" stroke-width="1"/><path d="M9 4h6l4 4v4l-3 3h-5l-4-3V7z" fill="#c0c0c0" stroke="#000" stroke-width="1.300"/><path d="M7 7l4-3l3 5l-3 5l-4-3z" fill="#f0f0a0"/><path d="M11 5l4 4l-4 4" stroke="#0000e0" stroke-width="1.300" fill="none"/><path d="M8 7h5M7 9h6M8 11h5" stroke="#00c8c8" stroke-width=".8" stroke-dasharray="1 1"/><path d="M7 14l-6.500 8" stroke="#000" stroke-width="2"/></svg><span class="t" style="left:164px;top:355.0px;">29:24:0302 Центр</span><div style="left:71px;top:389px;width:21px;background-image:linear-gradient(to right,#a5a28f 1px,transparent 1px);background-size:2px 1px;height:1px;"></div><div style="left:61px;top:385px;width:9px;height:9px;border:1px solid #7898b5;border-radius:2px;background:linear-gradient(135deg,#fff 30%,#c8c4b4)"><div style="left:1px;top:3px;width:5px;height:1px;background:#000"></div><div style="left:3px;top:1px;width:1px;height:5px;background:#000"></div></div><svg style="left:95px;top:377.5px;overflow:visible" width="24" height="22" viewBox="0 0 24 22"><rect x="4" y="0" width="2" height="1.500" fill="#000"/><rect x="7" y="0" width="2" height="1.500" fill="#000"/><rect x="10" y="0" width="2" height="1.500" fill="#000"/><rect x="13" y="0" width="2" height="1.500" fill="#000"/><rect x="16" y="0" width="2" height="1.500" fill="#000"/><rect x="19" y="0" width="2" height="1.500" fill="#000"/><rect x="4" y="3.500" width="17" height="1.200" fill="#000"/><path d="M5 7h7l1 2h6l3 7l-1 1l-9-2l-5 5l-5-4l-1-4z" fill="#008000" stroke="#000" stroke-width="1.300"/><path d="M4 8l8 7l-5 5l-5-4l-1-4z" fill="#00e8e8" stroke="#000" stroke-width="1"/><rect x="4.500" y="4" width="1" height="9" fill="#000"/><circle cx="5" cy="13" r="1.600" fill="#000"/></svg><span class="t" style="left:124px;top:381.0px;">29:24:04 Школа № 17-ЭМЗ-Аэропорт</span><div style="left:71px;top:415px;width:21px;background-image:linear-gradient(to right,#a5a28f 1px,transparent 1px);background-size:2px 1px;height:1px;"></div><div style="left:61px;top:411px;width:9px;height:9px;border:1px solid #7898b5;border-radius:2px;background:linear-gradient(135deg,#fff 30%,#c8c4b4)"><div style="left:1px;top:3px;width:5px;height:1px;background:#000"></div><div style="left:3px;top:1px;width:1px;height:5px;background:#000"></div></div><svg style="left:95px;top:403.5px;overflow:visible" width="24" height="22" viewBox="0 0 24 22"><rect x="4" y="0" width="2" height="1.500" fill="#000"/><rect x="7" y="0" width="2" height="1.500" fill="#000"/><rect x="10" y="0" width="2" height="1.500" fill="#000"/><rect x="13" y="0" width="2" height="1.500" fill="#000"/><rect x="16" y="0" width="2" height="1.500" fill="#000"/><rect x="19" y="0" width="2" height="1.500" fill="#000"/><rect x="4" y="3.500" width="17" height="1.200" fill="#000"/><path d="M5 7h7l1 2h6l3 7l-1 1l-9-2l-5 5l-5-4l-1-4z" fill="#008000" stroke="#000" stroke-width="1.300"/><path d="M4 8l8 7l-5 5l-5-4l-1-4z" fill="#00e8e8" stroke="#000" stroke-width="1"/><rect x="4.500" y="4" width="1" height="9" fill="#000"/><circle cx="5" cy="13" r="1.600" fill="#000"/></svg><span class="t" style="left:124px;top:407.0px;">29:24:05 "Болтинка"</span><div style="left:71px;top:441px;width:21px;background-image:linear-gradient(to right,#a5a28f 1px,transparent 1px);background-size:2px 1px;height:1px;"></div><div style="left:61px;top:437px;width:9px;height:9px;border:1px solid #7898b5;border-radius:2px;background:linear-gradient(135deg,#fff 30%,#c8c4b4)"><div style="left:1px;top:3px;width:5px;height:1px;background:#000"></div><div style="left:3px;top:1px;width:1px;height:5px;background:#000"></div></div><svg style="left:95px;top:429.5px;overflow:visible" width="24" height="22" viewBox="0 0 24 22"><rect x="4" y="0" width="2" height="1.500" fill="#000"/><rect x="7" y="0" width="2" height="1.500" fill="#000"/><rect x="10" y="0" width="2" height="1.500" fill="#000"/><rect x="13" y="0" width="2" height="1.500" fill="#000"/><rect x="16" y="0" width="2" height="1.500" fill="#000"/><rect x="19" y="0" width="2" height="1.500" fill="#000"/><rect x="4" y="3.500" width="17" height="1.200" fill="#000"/><path d="M5 7h7l1 2h6l3 7l-1 1l-9-2l-5 5l-5-4l-1-4z" fill="#008000" stroke="#000" stroke-width="1.300"/><path d="M4 8l8 7l-5 5l-5-4l-1-4z" fill="#00e8e8" stroke="#000" stroke-width="1"/><rect x="4.500" y="4" width="1" height="9" fill="#000"/><circle cx="5" cy="13" r="1.600" fill="#000"/></svg><span class="t" style="left:124px;top:433.0px;">29:24:06 ДОК</span><div style="left:71px;top:467px;width:21px;background-image:linear-gradient(to right,#a5a28f 1px,transparent 1px);background-size:2px 1px;height:1px;"></div><div style="left:61px;top:463px;width:9px;height:9px;border:1px solid #7898b5;border-radius:2px;background:linear-gradient(135deg,#fff 30%,#c8c4b4)"><div style="left:1px;top:3px;width:5px;height:1px;background:#000"></div><div style="left:3px;top:1px;width:1px;height:5px;background:#000"></div></div><svg style="left:95px;top:455.5px;overflow:visible" width="24" height="22" viewBox="0 0 24 22"><rect x="4" y="0" width="2" height="1.500" fill="#000"/><rect x="7" y="0" width="2" height="1.500" fill="#000"/><rect x="10" y="0" width="2" height="1.500" fill="#000"/><rect x="13" y="0" width="2" height="1.500" fill="#000"/><rect x="16" y="0" width="2" height="1.500" fill="#000"/><rect x="19" y="0" width="2" height="1.500" fill="#000"/><rect x="4" y="3.500" width="17" height="1.200" fill="#000"/><path d="M5 7h7l1 2h6l3 7l-1 1l-9-2l-5 5l-5-4l-1-4z" fill="#008000" stroke="#000" stroke-width="1.300"/><path d="M4 8l8 7l-5 5l-5-4l-1-4z" fill="#00e8e8" stroke="#000" stroke-width="1"/><rect x="4.500" y="4" width="1" height="9" fill="#000"/><circle cx="5" cy="13" r="1.600" fill="#000"/></svg><span class="t" style="left:124px;top:459.0px;">29:24:07 железная дорога</span><div style="left:71px;top:493px;width:21px;background-image:linear-gradient(to right,#a5a28f 1px,transparent 1px);background-size:2px 1px;height:1px;"></div><div style="left:61px;top:489px;width:9px;height:9px;border:1px solid #7898b5;border-radius:2px;background:linear-gradient(135deg,#fff 30%,#c8c4b4)"><div style="left:1px;top:3px;width:5px;height:1px;background:#000"></div><div style="left:3px;top:1px;width:1px;height:5px;background:#000"></div></div><svg style="left:95px;top:481.5px;overflow:visible" width="24" height="22" viewBox="0 0 24 22"><rect x="4" y="0" width="2" height="1.500" fill="#000"/><rect x="7" y="0" width="2" height="1.500" fill="#000"/><rect x="10" y="0" width="2" height="1.500" fill="#000"/><rect x="13" y="0" width="2" height="1.500" fill="#000"/><rect x="16" y="0" width="2" height="1.500" fill="#000"/><rect x="19" y="0" width="2" height="1.500" fill="#000"/><rect x="4" y="3.500" width="17" height="1.200" fill="#000"/><path d="M5 7h7l1 2h6l3 7l-1 1l-9-2l-5 5l-5-4l-1-4z" fill="#008000" stroke="#000" stroke-width="1.300"/><path d="M4 8l8 7l-5 5l-5-4l-1-4z" fill="#00e8e8" stroke="#000" stroke-width="1"/><rect x="4.500" y="4" width="1" height="9" fill="#000"/><circle cx="5" cy="13" r="1.600" fill="#000"/></svg><span class="t" style="left:124px;top:485.0px;">29:24:08 луговая- зеленая</span><div style="left:31px;top:519px;width:21px;background-image:linear-gradient(to right,#a5a28f 1px,transparent 1px);background-size:2px 1px;height:1px;"></div><div style="left:21px;top:515px;width:9px;height:9px;border:1px solid #7898b5;border-radius:2px;background:linear-gradient(135deg,#fff 30%,#c8c4b4)"><div style="left:1px;top:3px;width:5px;height:1px;background:#000"></div><div style="left:3px;top:1px;width:1px;height:5px;background:#000"></div></div><svg style="left:55px;top:509.5px;" width="23" height="20" viewBox="0 0 23 20"><path d="M2 8l4-3l10 1l2 4l3 4l-1 1l-7-2l-6 5l-4-4l-1-4z" fill="#008000" stroke="#000" stroke-width="1.300"/><rect x="8.500" y="0" width="1" height="9" fill="#000"/><path d="M9.500 1h6l-1 1.500l1 1.500h-6z" fill="#e00000"/><rect x="11" y="4.500" width="6" height="1" fill="#000"/><rect x="7.500" y="7" width="2.500" height="2.500" fill="#fff"/><rect x="5" y="0" width="0" height="0"/></svg><span class="t" style="left:84px;top:511.0px;">29:241 Город Котлас (условная схема)</span><div style="left:31px;top:545px;width:21px;background-image:linear-gradient(to right,#a5a28f 1px,transparent 1px);background-size:2px 1px;height:1px;"></div><div style="left:21px;top:541px;width:9px;height:9px;border:1px solid #7898b5;border-radius:2px;background:linear-gradient(135deg,#fff 30%,#c8c4b4)"><div style="left:1px;top:3px;width:5px;height:1px;background:#000"></div><div style="left:3px;top:1px;width:1px;height:5px;background:#000"></div></div><svg style="left:55px;top:535.5px;" width="23" height="20" viewBox="0 0 23 20"><path d="M2 8l4-3l10 1l2 4l3 4l-1 1l-7-2l-6 5l-4-4l-1-4z" fill="#008000" stroke="#000" stroke-width="1.300"/><rect x="8.500" y="0" width="1" height="9" fill="#000"/><path d="M9.500 1h6l-1 1.500l1 1.500h-6z" fill="#e00000"/><rect x="11" y="4.500" width="6" height="1" fill="#000"/><rect x="7.500" y="7" width="2.500" height="2.500" fill="#fff"/><rect x="5" y="0" width="0" height="0"/></svg><span class="t" style="left:84px;top:537.0px;">29:242 Юридические лица</span><div style="left:31px;top:571px;width:21px;background-image:linear-gradient(to right,#a5a28f 1px,transparent 1px);background-size:2px 1px;height:1px;"></div><div style="left:21px;top:567px;width:9px;height:9px;border:1px solid #7898b5;border-radius:2px;background:linear-gradient(135deg,#fff 30%,#c8c4b4)"><div style="left:1px;top:3px;width:5px;height:1px;background:#000"></div><div style="left:3px;top:1px;width:1px;height:5px;background:#000"></div></div><svg style="left:55px;top:561.5px;" width="23" height="20" viewBox="0 0 23 20"><path d="M2 8l4-3l10 1l2 4l3 4l-1 1l-7-2l-6 5l-4-4l-1-4z" fill="#008000" stroke="#000" stroke-width="1.300"/><rect x="8.500" y="0" width="1" height="9" fill="#000"/><path d="M9.500 1h6l-1 1.500l1 1.500h-6z" fill="#e00000"/><rect x="11" y="4.500" width="6" height="1" fill="#000"/><rect x="7.500" y="7" width="2.500" height="2.500" fill="#fff"/><rect x="5" y="0" width="0" height="0"/></svg><span class="t" style="left:84px;top:563.0px;">29:243 Частные предприниматели</span><div style="left:31px;top:597px;width:21px;background-image:linear-gradient(to right,#a5a28f 1px,transparent 1px);background-size:2px 1px;height:1px;"></div><div style="left:21px;top:593px;width:9px;height:9px;border:1px solid #7898b5;border-radius:2px;background:linear-gradient(135deg,#fff 30%,#c8c4b4)"><div style="left:1px;top:3px;width:5px;height:1px;background:#000"></div><div style="left:3px;top:1px;width:1px;height:5px;background:#000"></div></div><svg style="left:55px;top:587.5px;" width="23" height="20" viewBox="0 0 23 20"><path d="M2 8l4-3l10 1l2 4l3 4l-1 1l-7-2l-6 5l-4-4l-1-4z" fill="#008000" stroke="#000" stroke-width="1.300"/><rect x="8.500" y="0" width="1" height="9" fill="#000"/><path d="M9.500 1h6l-1 1.500l1 1.500h-6z" fill="#e00000"/><rect x="11" y="4.500" width="6" height="1" fill="#000"/><rect x="7.500" y="7" width="2.500" height="2.500" fill="#fff"/><rect x="5" y="0" width="0" height="0"/></svg><span class="t" style="left:84px;top:589.0px;">29:244 Арендаторы</span><div style="left:31px;top:623px;width:21px;background-image:linear-gradient(to right,#a5a28f 1px,transparent 1px);background-size:2px 1px;height:1px;"></div><div style="left:21px;top:619px;width:9px;height:9px;border:1px solid #7898b5;border-radius:2px;background:linear-gradient(135deg,#fff 30%,#c8c4b4)"><div style="left:1px;top:3px;width:5px;height:1px;background:#000"></div><div style="left:3px;top:1px;width:1px;height:5px;background:#000"></div></div><svg style="left:55px;top:613.5px;" width="23" height="20" viewBox="0 0 23 20"><path d="M2 8l4-3l10 1l2 4l3 4l-1 1l-7-2l-6 5l-4-4l-1-4z" fill="#008000" stroke="#000" stroke-width="1.300"/><rect x="8.500" y="0" width="1" height="9" fill="#000"/><path d="M9.500 1h6l-1 1.500l1 1.500h-6z" fill="#e00000"/><rect x="11" y="4.500" width="6" height="1" fill="#000"/><rect x="7.500" y="7" width="2.500" height="2.500" fill="#fff"/><rect x="5" y="0" width="0" height="0"/></svg><span class="t" style="left:84px;top:615.0px;">29:245 Инвентаризация</span><div style="left:392px;top:107px;width:873px;height:777px;background:#fcfcfe;border:1px solid #919b9c;box-shadow:1px 1px 0 #d0cebf,2px 2px 0 #e0ddd0"></div><div class="tab on" style="left:392px;top:87px;width:108px;height:21px;"></div><span class="t" style="left:400px;top:89.5px;">Участки квартала</span><div class="tab" style="left:500px;top:89px;width:126px;height:18px;"></div><span class="t" style="left:505px;top:91.5px;">Реестр точек квартала</span><div class="tab" style="left:628px;top:89px;width:121px;height:18px;"></div><span class="t" style="left:633px;top:91.5px;">Реестр меж квартала</span><div class="tab" style="left:751px;top:89px;width:147px;height:18px;"></div><span class="t" style="left:756px;top:91.5px;">Описание границ квартала</span><span class="t" style="left:404.5px;top:110.5px;">29:24:030101</span><div style="left:399px;top:135px;width:864px;height:1px;background:#aca899"></div><div style="left:399px;top:139px;width:1px;height:24px;background:#aca899"></div><div style="left:400px;top:139px;width:1px;height:24px;background:#fff"></div><svg style="left:403px;top:142px;" width="100" height="16" viewBox="0 0 100 16"><path d="M2 4v7M4 9l6-4" stroke="#b0ad9c" stroke-width="1" fill="none"/><path d="M31 9l7-4" stroke="#b0ad9c" stroke-width="1" fill="none"/><path d="M57 3.500L65 7.500L57 11.500Z" fill="#000"/><path d="M84 3.500L92 7.500L84 11.500ZM93 3.500v8" fill="#000" stroke="#000" stroke-width="1.500"/></svg><svg style="left:512px;top:144px;" width="12" height="11" viewBox="0 0 12 11"><path d="M8 9.300A3.800 3.800 0 1 1 8 2.700" fill="none" stroke="#000" stroke-width="2.200"/><path d="M6 0L12 1.500L8.500 6.500Z" fill="#000"/></svg><svg style="left:538px;top:141px;" width="17" height="17" viewBox="0 0 17 17"><path d="M1 3h5l2 2h7v8H1z" fill="#f0e040" stroke="#a09000" stroke-width="1"/><circle cx="9" cy="9" r="5.500" fill="none" stroke="#f00" stroke-width="2"/><path d="M5 5l8 8" stroke="#f00" stroke-width="2"/><circle cx="7" cy="8" r="3" fill="#e8e8ff" stroke="#000" stroke-width="1"/><path d="M5 11l-3 4" stroke="#000" stroke-width="1.500"/></svg><svg style="left:560px;top:148px;" width="5" height="3" viewBox="0 0 5 3"><path d="M0 0h5L2.500 3z" fill="#000"/></svg><div style="left:396px;top:164px;width:867px;height:699px;background:#fff;border:1px solid #7f9db9;overflow:hidden"><div style="left:0;top:0;width:865px;height:697px"><div style="left:0px;top:1px;width:847px;height:16px;background:#ece9d8"></div><div style="left:0px;top:17px;width:847px;height:2px;background:#000"></div><div style="left:0px;top:1px;width:1px;height:16px;background:#fff"></div><div style="left:12px;top:1px;width:1px;height:17px;background:#000"></div><div style="left:13px;top:1px;width:1px;height:16px;background:#fff"></div><div style="left:184px;top:1px;width:1px;height:17px;background:#000"></div><span class="t" style="left:16px;top:3px;">Кадастровый №</span><div style="left:185px;top:1px;width:1px;height:16px;background:#fff"></div><div style="left:217px;top:1px;width:1px;height:17px;background:#000"></div><span class="t" style="left:194px;top:3px;">(...)</span><div style="left:218px;top:1px;width:1px;height:16px;background:#fff"></div><div style="left:303px;top:1px;width:1px;height:17px;background:#000"></div><span class="t" style="left:221px;top:3px;">Суффикс</span><div style="left:304px;top:1px;width:1px;height:16px;background:#fff"></div><div style="left:846px;top:1px;width:1px;height:17px;"></div><span class="t" style="left:307px;top:3px;">Расположение</span><div style="left:0px;top:36px;width:847px;height:1px;background:#c0c0c0"></div><div style="left:0px;top:54px;width:847px;height:1px;background:#c0c0c0"></div><div style="left:0px;top:72px;width:847px;height:1px;background:#c0c0c0"></div><div style="left:0px;top:90px;width:847px;height:1px;background:#c0c0c0"></div><div style="left:0px;top:108px;width:847px;height:1px;background:#c0c0c0"></div><div style="left:0px;top:126px;width:847px;height:1px;background:#c0c0c0"></div><div style="left:0px;top:144px;width:847px;height:1px;background:#c0c0c0"></div><div style="left:0px;top:162px;width:847px;height:1px;background:#c0c0c0"></div><div style="left:0px;top:180px;width:847px;height:1px;background:#c0c0c0"></div><div style="left:0px;top:198px;width:847px;height:1px;background:#c0c0c0"></div><div style="left:0px;top:216px;width:847px;height:1px;background:#c0c0c0"></div><div style="left:0px;top:234px;width:847px;height:1px;background:#c0c0c0"></div><div style="left:0px;top:252px;width:847px;height:1px;background:#c0c0c0"></div><div style="left:0px;top:270px;width:847px;height:1px;background:#c0c0c0"></div><div style="left:0px;top:288px;width:847px;height:1px;background:#c0c0c0"></div><div style="left:0px;top:306px;width:847px;height:1px;background:#c0c0c0"></div><div style="left:0px;top:324px;width:847px;height:1px;background:#c0c0c0"></div><div style="left:0px;top:342px;width:847px;height:1px;background:#c0c0c0"></div><div style="left:0px;top:360px;width:847px;height:1px;background:#c0c0c0"></div><div style="left:0px;top:378px;width:847px;height:1px;background:#c0c0c0"></div><div style="left:0px;top:396px;width:847px;height:1px;background:#c0c0c0"></div><div style="left:0px;top:414px;width:847px;height:1px;background:#c0c0c0"></div><div style="left:0px;top:432px;width:847px;height:1px;background:#c0c0c0"></div><div style="left:0px;top:450px;width:847px;height:1px;background:#c0c0c0"></div><div style="left:0px;top:468px;width:847px;height:1px;background:#c0c0c0"></div><div style="left:0px;top:486px;width:847px;height:1px;background:#c0c0c0"></div><div style="left:0px;top:504px;width:847px;height:1px;background:#c0c0c0"></div><div style="left:0px;top:522px;width:847px;height:1px;background:#c0c0c0"></div><div style="left:0px;top:540px;width:847px;height:1px;background:#c0c0c0"></div><div style="left:0px;top:558px;width:847px;height:1px;background:#c0c0c0"></div><div style="left:0px;top:576px;width:847px;height:1px;background:#c0c0c0"></div><div style="left:0px;top:594px;width:847px;height:1px;background:#c0c0c0"></div><div style="left:0px;top:612px;width:847px;height:1px;background:#c0c0c0"></div><div style="left:0px;top:630px;width:847px;height:1px;background:#c0c0c0"></div><div style="left:0px;top:648px;width:847px;height:1px;background:#c0c0c0"></div><div style="left:0px;top:666px;width:847px;height:1px;background:#c0c0c0"></div><div style="left:0px;top:684px;width:847px;height:1px;background:#c0c0c0"></div><div style="left:0px;top:702px;width:847px;height:1px;background:#c0c0c0"></div><div style="left:0px;top:19px;width:13px;height:657px;background:#ece9d8;border-right:1px solid #000"></div><div style="left:0px;top:36px;width:13px;height:1px;background:#000"></div><div style="left:0px;top:54px;width:13px;height:1px;background:#000"></div><div style="left:0px;top:72px;width:13px;height:1px;background:#000"></div><div style="left:0px;top:90px;width:13px;height:1px;background:#000"></div><div style="left:0px;top:108px;width:13px;height:1px;background:#000"></div><div style="left:0px;top:126px;width:13px;height:1px;background:#000"></div><div style="left:0px;top:144px;width:13px;height:1px;background:#000"></div><div style="left:0px;top:162px;width:13px;height:1px;background:#000"></div><div style="left:0px;top:180px;width:13px;height:1px;background:#000"></div><div style="left:0px;top:198px;width:13px;height:1px;background:#000"></div><div style="left:0px;top:216px;width:13px;height:1px;background:#000"></div><div style="left:0px;top:234px;width:13px;height:1px;background:#000"></div><div style="left:0px;top:252px;width:13px;height:1px;background:#000"></div><div style="left:0px;top:270px;width:13px;height:1px;background:#000"></div><div style="left:0px;top:288px;width:13px;height:1px;background:#000"></div><div style="left:0px;top:306px;width:13px;height:1px;background:#000"></div><div style="left:0px;top:324px;width:13px;height:1px;background:#000"></div><div style="left:0px;top:342px;width:13px;height:1px;background:#000"></div><div style="left:0px;top:360px;width:13px;height:1px;background:#000"></div><div style="left:0px;top:378px;width:13px;height:1px;background:#000"></div><div style="left:0px;top:396px;width:13px;height:1px;background:#000"></div><div style="left:0px;top:414px;width:13px;height:1px;background:#000"></div><div style="left:0px;top:432px;width:13px;height:1px;background:#000"></div><div style="left:0px;top:450px;width:13px;height:1px;background:#000"></div><div style="left:0px;top:468px;width:13px;height:1px;background:#000"></div><div style="left:0px;top:486px;width:13px;height:1px;background:#000"></div><div style="left:0px;top:504px;width:13px;height:1px;background:#000"></div><div style="left:0px;top:522px;width:13px;height:1px;background:#000"></div><div style="left:0px;top:540px;width:13px;height:1px;background:#000"></div><div style="left:0px;top:558px;width:13px;height:1px;background:#000"></div><div style="left:0px;top:576px;width:13px;height:1px;background:#000"></div><div style="left:0px;top:594px;width:13px;height:1px;background:#000"></div><div style="left:0px;top:612px;width:13px;height:1px;background:#000"></div><div style="left:0px;top:630px;width:13px;height:1px;background:#000"></div><div style="left:0px;top:648px;width:13px;height:1px;background:#000"></div><div style="left:0px;top:666px;width:13px;height:1px;background:#000"></div><svg style="left:3px;top:23px;" width="7" height="10" viewBox="0 0 7 10"><path d="M0 0L6 5L0 10Z" fill="#000"/></svg><div style="left:185px;top:19px;width:33px;height:17px;background:#000080"></div><div style="left:185px;top:37px;width:33px;height:17px;background:#000080"></div><span class="n" style="left:52px;top:21px;font-weight:bold;color:#000080;letter-spacing:0;font-size:12px;font-family:Liberation Serif,serif;font-size:12px;letter-spacing:-.2px">29:24:030101:0001</span><span class="n" style="left:52px;top:39px;font-weight:bold;color:#000080;letter-spacing:0;font-size:12px;font-family:Liberation Serif,serif;font-size:12px;letter-spacing:-.2px">29:24:030101:0002</span><span class="n" style="left:194px;top:20px;font-weight:bold;color:#fff;font-size:13px;letter-spacing:0">10</span><span class="n" style="left:194px;top:38px;font-weight:bold;color:#fff;font-size:13px;letter-spacing:0">10</span><span class="n" style="left:221px;top:21px;font-weight:bold;color:#000080;letter-spacing:0;font-size:12px;font-size:13px">116</span><span class="n" style="left:221px;top:39px;font-weight:bold;color:#000080;letter-spacing:0;font-size:12px;font-size:13px">6</span><span class="n" style="left:307px;top:20px;font-weight:bold;color:#000080;letter-spacing:0;font-size:12px;font-size:12px;letter-spacing:.12px">Архангельская обл.,Котлас г,7 Съезда Советов ул.</span><span class="n" style="left:307px;top:38px;font-weight:bold;color:#000080;letter-spacing:0;font-size:12px;font-size:12px;letter-spacing:.12px">Архангельская обл.,г. Котлас,ул. Островского</span><div style="left:847px;top:1px;width:17px;height:679px;background:linear-gradient(to right,#f3f1ec,#fefefb)"></div><div style="left:848px;top:2px;width:15px;height:15px;border:1px solid #fff;border-radius:3px;background:linear-gradient(135deg,#cbdafd,#b7caf7);box-shadow:0 0 0 1px #e6eefc"><svg style="left:0;top:0" width="15" height="15"><path d="M3.500 9.500L7.500 5.500L11.500 9.500" fill="none" stroke="#4d6185" stroke-width="2" transform="rotate(0 7.500 7.500)"/></svg></div><div style="left:848px;top:662px;width:15px;height:15px;border:1px solid #fff;border-radius:3px;background:linear-gradient(135deg,#cbdafd,#b7caf7);box-shadow:0 0 0 1px #e6eefc"><svg style="left:0;top:0" width="15" height="15"><path d="M3.500 9.500L7.500 5.500L11.500 9.500" fill="none" stroke="#4d6185" stroke-width="2" transform="rotate(180 7.500 7.500)"/></svg></div><div style="left:848px;top:19px;width:15px;height:180px;border:1px solid #fff;border-radius:3px;background:linear-gradient(to right,#c9d8fc,#bacdf8);box-shadow:0 0 0 1px #e6eefc"><div style="left:4px;top:85px;width:6px;height:8px;background:repeating-linear-gradient(#eef4fe 0 1px,#8cb0f8 1px 2px)"></div></div><div style="left:0px;top:679px;width:847px;height:17px;background:linear-gradient(#f3f1ec,#fefefb)"></div><div style="left:1px;top:680px;width:15px;height:15px;border:1px solid #fff;border-radius:3px;background:linear-gradient(135deg,#cbdafd,#b7caf7);box-shadow:0 0 0 1px #e6eefc"><svg style="left:0;top:0" width="15" height="15"><path d="M3.500 9.500L7.500 5.500L11.500 9.500" fill="none" stroke="#4d6185" stroke-width="2" transform="rotate(270 7.500 7.500)"/></svg></div><div style="left:831px;top:680px;width:15px;height:15px;border:1px solid #fff;border-radius:3px;background:linear-gradient(135deg,#cbdafd,#b7caf7);box-shadow:0 0 0 1px #e6eefc"><svg style="left:0;top:0" width="15" height="15"><path d="M3.500 9.500L7.500 5.500L11.500 9.500" fill="none" stroke="#4d6185" stroke-width="2" transform="rotate(90 7.500 7.500)"/></svg></div><div style="left:18px;top:680px;width:15px;height:15px;border:1px solid #fff;border-radius:3px;background:linear-gradient(#c9d8fc,#bacdf8);box-shadow:0 0 0 1px #e6eefc"><div style="left:3px;top:3px;width:8px;height:7px;background:repeating-linear-gradient(to right,#eef4fe 0 1px,#8cb0f8 1px 2px)"></div></div><div style="left:847px;top:679px;width:17px;height:17px;background:#ece9d8"></div></div></div><div style="left:393px;top:864px;width:871px;height:19px;background:#ece9d8;border-top:1px solid #aca899"></div><span class="th" style="left:397.5px;top:867px;">1 : 93</span><div style="left:494px;top:867px;width:1px;height:14px;background:#aca899"></div><div style="left:495px;top:867px;width:1px;height:14px;background:#fff"></div><span class="th" style="left:499.5px;top:867px;">Зарегистрированный (ранее учтенный) : (10)</span></div><div style="left:366px;top:312px;width:5px;height:5px;background:#101010"></div><div style="left:1164px;top:312px;width:5px;height:5px;background:#101010"></div><div class="win" style="left:366px;top:312px;width:803px;height:624px;"><div class="tb"></div><svg style="left:6px;top:8px;" width="16" height="16" viewBox="0 0 16 16"><rect x="0" y="0" width="16" height="16" fill="#d86848"/><rect x="1" y="1" width="14" height="14" fill="#2838a8"/><rect x="8" y="1" width="7" height="7" fill="#70c8d8"/><path d="M9 1h3l1 2l2 1v3l-3-1l-1-2l-2-1z" fill="#a8e0e8"/><circle cx="5.500" cy="5.500" r="4.300" fill="#1c2890"/><path d="M3 2.500l3-1l2 1.500l-1 2l1 2l-2 2.500l-1.500-2l-1.500-1l-1-2z" fill="#a89830"/><path d="M6 2l2 1.500l-.5 1.500l-1.500-.5z" fill="#d8c848"/><rect x="1" y="9" width="14" height="6" fill="#202878"/><text x="1.500" y="14.200" font-family="Liberation Sans,sans-serif" font-size="6.500" font-weight="bold" font-style="italic" fill="#fff" letter-spacing="-.3">Geo</text></svg><span class="ttl" style="left:25.5px;top:9px;">Интегрированная картография "MapInfo"</span><div class="cb" style="left:730px;top:6px;width:21px;height:21px;"><div style="left:4px;top:13px;width:8px;height:3px;background:#fff"></div></div><div class="cb" style="left:753px;top:6px;width:21px;height:21px;"><div style="left:4px;top:4px;width:11px;height:11px;border:1px solid #fff;border-top-width:3px"></div></div><div class="cb x" style="left:776px;top:6px;width:21px;height:21px;"><svg style="left:0;top:0" width="19" height="19"><path d="M5 5L14 14M14 5L5 14" stroke="#fff" stroke-width="2.200" stroke-linecap="square"/></svg></div><div style="left:4px;top:30px;width:795px;height:590px;background:#fff"></div><div style="left:4px;top:30px;width:795px;height:28px;background:linear-gradient(to bottom,rgba(255,255,255,0) 70%,rgba(150,145,120,.28) 100%),linear-gradient(to right,#f7f6f1,#efede2 40%,#ece9d8 85%)"></div><div style="left:4px;top:58px;width:795px;height:27px;background:linear-gradient(to bottom,rgba(255,255,255,0) 70%,rgba(150,145,120,.28) 100%),linear-gradient(to right,#f7f6f1,#efede2 40%,#ece9d8 85%)"></div><div style="left:4px;top:57px;width:795px;height:1px;background:#fff"></div><div style="left:4px;top:30px;width:795px;height:1px;background:#fff"></div><div style="left:20px;top:32px;width:769px;height:1px;background:#c5c2b2"></div><div style="left:20px;top:59px;width:769px;height:1px;background:#c5c2b2"></div><div style="left:796px;top:31px;width:1px;height:54px;background:#c5c2b2"></div><div style="left:124px;top:31px;width:1px;height:26px;background:#d5d2c2"></div><div style="left:125px;top:31px;width:1px;height:26px;background:#fff"></div><div class="dgrip" style="left:10px;top:35px;width:3px;height:19px;"></div><div class="dgrip" style="left:128px;top:35px;width:3px;height:19px;"></div><div class="dgrip" style="left:10px;top:62px;width:3px;height:19px;"></div><div class="dgrip" style="left:484px;top:62px;width:3px;height:19px;"></div><div style="left:479px;top:59px;width:1px;height:25px;background:#d5d2c2"></div><div style="left:480px;top:59px;width:1px;height:25px;background:#fff"></div><svg style="left:22px;top:37.5px;" width="16" height="14" viewBox="0 0 16 14"><path d="M.5 3.500h4l1.500 1.500h6v2.500H4L.5 12z" fill="#f0e868" stroke="#000" stroke-width="1"/><path d="M.5 12L4 7.500h11L11.500 12z" fill="#f0e868" stroke="#000" stroke-width="1"/></svg><svg style="left:45.5px;top:38.5px;" width="12" height="12" viewBox="0 0 12 12"><path d="M.5 3h4l1.500-2h4l1 2v8H.5z" fill="#f0e868" stroke="#000" stroke-width="1"/></svg><svg style="left:67px;top:36.5px;" width="15" height="16" viewBox="0 0 15 16"><rect x=".7" y=".7" width="13.600" height="14.600" rx="1" fill="#000" stroke="#000" stroke-width="1.400"/><rect x="3" y="1.500" width="9" height="6.500" fill="#fff"/><rect x="3" y="1" width="9" height="1" fill="#f00"/><rect x="4" y="10" width="7" height="5" fill="#c0c0c0"/><rect x="5" y="11" width="2" height="3" fill="#000"/></svg><svg style="left:139px;top:37px;" width="16" height="17" viewBox="0 0 16 17"><path d="M8 0v17M0 8.500h16M2 2l12 13M14 2L2 15" stroke="#ffff00" stroke-width="1.400"/><path d="M3.500 2.500h6l3 3v9h-9z" fill="#fff" stroke="#000" stroke-width="1"/><path d="M5.500 6.500h3M5.500 8.500h5M5.500 10.500h5M5.500 12.500h5" stroke="#000" stroke-width="1"/></svg><svg style="left:162px;top:37px;" width="16" height="17" viewBox="0 0 16 17"><path d="M8 0v17M0 8.500h16M2 2l12 13M14 2L2 15" stroke="#ffff00" stroke-width="1.400"/><path d="M2.500 5.500h8l3 3v4h-11z" fill="#fff" stroke="#000" stroke-width="1"/><rect x="4" y="7.500" width="5" height="2" fill="#808080"/><path d="M4 11h7" stroke="#000"/></svg><svg style="left:185px;top:37px;" width="18" height="18" viewBox="0 0 18 18"><path d="M.5 .5h7l2 2v9h-9z" fill="#fff" stroke="#000" stroke-width="1"/><path d="M2 3.500h4M2 5.500h5M2 7.500h5M2 9.500h5" stroke="#000" stroke-width="1"/><path d="M9 2c4 0 6 2 6 5h2l-3.500 3.500L10 7h2c0-1.500-1-2.500-3-2.500z" fill="#f00"/><rect x="8" y="9" width="9" height="9" fill="#000"/><rect x="10" y="9" width="5" height="3" fill="#88f"/><rect x="10" y="14" width="5" height="4" fill="#c0c0c0"/></svg><svg style="left:208px;top:37px;" width="18" height="18" viewBox="0 0 18 18"><path d="M.5 .5h7l2 2v9h-9z" fill="#fff" stroke="#000" stroke-width="1"/><path d="M2 3.500h4M2 5.500h5M2 7.500h5M2 9.500h5" stroke="#000" stroke-width="1"/><path d="M9 2c4 0 6 2 6 5h2l-3.500 3.500L10 7h2c0-1.500-1-2.500-3-2.500z" fill="#f00"/><path d="M7.500 10.500h3l1-1.500h3l1 1.500v7h-8z" fill="#f0e868" stroke="#000" stroke-width="1"/><rect x="9" y="12" width="6" height="5" fill="#fff"/></svg><div style="left:231px;top:33px;width:1px;height:22px;background:#c5c2b2"></div><svg style="left:241.5px;top:37px;" width="11" height="17" viewBox="0 0 11 17"><path d="M5.500 0L10.500 9H7v8H4V9H.5z" fill="#f00" stroke="#800000" stroke-width=".6"/></svg><svg style="left:20.5px;top:63px;" width="17" height="17" viewBox="0 0 17 17"><circle cx="7" cy="7" r="6" fill="#fff" stroke="#000" stroke-width="1.500"/><path d="M3.500 7h7" stroke="#000" stroke-width="1.800"/><path d="M11.500 11.500l4.500 4.500" stroke="#000" stroke-width="2.200"/><path d="M7 3.500v7" stroke="#000" stroke-width="1.800"/></svg><svg style="left:44px;top:63px;" width="17" height="17" viewBox="0 0 17 17"><circle cx="7" cy="7" r="6" fill="#fff" stroke="#000" stroke-width="1.500"/><path d="M3.500 7h7" stroke="#000" stroke-width="1.800"/><path d="M11.500 11.500l4.500 4.500" stroke="#000" stroke-width="2.200"/></svg><svg style="left:67px;top:62.5px;" width="17" height="17" viewBox="0 0 17 17"><path d="M3 9L1 6.500l1-1l2.500 2V3l1.500-.5l1 3.500V1.500l1.500-.5l.8 5l.7-4l1.500.3l.2 4.700l1.300-3l1.300.6l-1 6l-1.300 4.400H5.500z" fill="#fff" stroke="#000" stroke-width="1"/></svg><svg style="left:94px;top:64.5px;" width="9" height="15" viewBox="0 0 9 15"><circle cx="5" cy="2" r="1.800" fill="#000080"/><path d="M1.500 5.500h5v7h2v1.500h-8v-1.500h2v-5.500h-1z" fill="#000"/></svg><div style="left:110px;top:61px;width:23px;height:22px;background:#fff;border:1px solid #98b0d0;border-radius:3px"></div><svg style="left:118px;top:64.5px;" width="10" height="16" viewBox="0 0 10 16"><path d="M.5 0v13l3-3l2.500 5.500l2-1L5.500 9H9.500z" fill="#000"/></svg><svg style="left:137px;top:64.5px;" width="15" height="15" viewBox="0 0 15 15"><rect x=".5" y=".5" width="13" height="13" fill="none" stroke="#000" stroke-width="1" stroke-dasharray="2 1"/><path d="M5 3.500v9l2-2l1.500 3.500l1.500-.7L8.500 10H11z" fill="#000"/><path d="M5 9l3 1" stroke="#f00"/></svg><svg style="left:160px;top:65.5px;" width="16" height="14" viewBox="0 0 16 14"><rect x=".7" y=".7" width="14" height="11.600" fill="#fff" stroke="#000" stroke-width="1.400"/><path d="M4 1v3M7.500 1v4M11 1v3" stroke="#000"/><text x="4.500" y="10.500" font-family="Liberation Sans,sans-serif" font-size="6" font-weight="bold" fill="#0000c0">1 3</text></svg><svg style="left:182px;top:63.5px;" width="18" height="17" viewBox="0 0 18 17"><path d="M2 14.500V6.500L8 1.500L15.500 8.500V14.500z" fill="none" stroke="#0000a0" stroke-width="1.200"/><rect x="0" y="13" width="3" height="3" fill="#000"/><rect x="14" y="13" width="3" height="3" fill="#000"/><rect x=".5" y="5" width="3" height="3" fill="#000"/><rect x="6.500" y="0" width="3" height="3" fill="#000"/><rect x="14" y="7" width="3" height="3" fill="#000"/></svg><div style="left:205px;top:62px;width:1px;height:21px;background:#c5c2b2"></div><svg style="left:222px;top:64.5px;" width="17" height="17" viewBox="0 0 17 17"><path d="M2 15L5 5l10 10z" fill="#40e0e0" stroke="#000" stroke-width="1"/><path d="M1 16l14-14l1.500 1.500L3 16.500z" fill="#fff" stroke="#000" stroke-width="1"/><path d="M3 1l11 12" stroke="#e0e000" stroke-width="2"/><path d="M1 11h15" stroke="#808000" stroke-width="1.500"/></svg><svg style="left:246px;top:64.5px;" width="16" height="15" viewBox="0 0 16 15"><path d="M1 14V6l6-5l8 6v7z" fill="#008080" stroke="#000" stroke-width="1.300"/><text x="4.500" y="13" font-family="Liberation Sans,sans-serif" font-size="10" fill="#fff">?</text></svg><svg style="left:269px;top:63.5px;" width="17" height="17" viewBox="0 0 17 17"><path d="M1 13l5-4h10l-5 4z" fill="#006000" stroke="#000" stroke-width="1"/><path d="M1 9l5-4h10l-5 4z" fill="#808000" stroke="#000" stroke-width="1"/><path d="M1 5l5-4h10l-5 4z" fill="#fff" stroke="#000" stroke-width="1"/></svg><div style="left:292px;top:62px;width:1px;height:21px;background:#c5c2b2"></div><svg style="left:308px;top:63.5px;" width="18" height="18" viewBox="0 0 18 18"><rect x="11" y="11" width="6" height="6" fill="#ffffa0"/><path d="M1 2l3-2l6 6l3 5l-3 2l-4-4z" fill="#fff" stroke="#000" stroke-width="1"/><path d="M10 6l4 4l-3 4z" fill="#f00"/><path d="M13 12h4M12 14h5M12 16h5" stroke="#ffff00" stroke-dasharray="1 1"/></svg><span class="n" style="left:334.5px;top:61.5px;font-family:Liberation Serif,serif;font-size:17px;font-weight:bold;line-height:20px">Σ</span><svg style="left:354.5px;top:71.5px;" width="5" height="3" viewBox="0 0 5 3"><path d="M0 0h5L2.500 3z" fill="#000"/></svg><svg style="left:373.5px;top:64.5px;" width="9" height="15" viewBox="0 0 9 15"><circle cx="5" cy="2" r="1.800" fill="#000080"/><path d="M1.500 5.500h5v7h2v1.500h-8v-1.500h2v-5.500h-1z" fill="#000"/></svg><svg style="left:390.5px;top:71.5px;" width="5" height="3" viewBox="0 0 5 3"><path d="M0 0h5L2.500 3z" fill="#000"/></svg><div style="left:405px;top:62px;width:1px;height:21px;background:#c5c2b2"></div><svg style="left:421px;top:65.5px;" width="16" height="13" viewBox="0 0 16 13"><rect x=".5" y="2.500" width="13" height="9" fill="#ece9d8" stroke="#808080" stroke-width="1"/><path d="M.5 2.500h13v9" fill="none" stroke="#000" stroke-width="1"/><path d="M8 10l4-5M10 10l2-2.500" stroke="#808080"/></svg><svg style="left:445px;top:64.5px;" width="15" height="15" viewBox="0 0 15 15"><path d="M1 1l12 12M13 1L1 13" stroke="#f00" stroke-width="2.400"/><path d="M7 2v7M7 11v2" stroke="#000" stroke-width="2"/></svg><svg style="left:494px;top:63.5px;" width="15" height="15" viewBox="0 0 15 15"><path d="M2 1l5-1l1 4l3 1l-4 4l-1-3z" fill="#0000c0" stroke="#000080" stroke-width="1"/><path d="M8 7l6 7" stroke="#000" stroke-width="1.500"/><path d="M3 1l3 .5" stroke="#88f"/></svg><svg style="left:517px;top:65.5px;" width="16" height="13" viewBox="0 0 16 13"><path d="M.5 0v11.500h14v-5L9 .5" fill="none" stroke="#000" stroke-width="1.200"/></svg><svg style="left:540px;top:64.5px;" width="16" height="14" viewBox="0 0 16 14"><path d="M1 13V5.500L6 .8h3.500l5 5V13z" fill="#008080" stroke="#000" stroke-width="1.300"/></svg><span class="n" style="left:564.5px;top:62.5px;font-family:Liberation Serif,serif;font-size:15px;font-weight:bold;line-height:18px">A</span><svg style="left:586px;top:64.5px;" width="15" height="15" viewBox="0 0 15 15"><rect x=".7" y=".7" width="13" height="13" fill="#fff" stroke="#000" stroke-width="1.400"/><rect x="3.0" y="3.0" width="2" height="2" fill="#f00"/><rect x="6.5" y="3.0" width="2" height="2" fill="#000"/><rect x="10.0" y="3.0" width="2" height="2" fill="#f00"/><rect x="3.0" y="6.5" width="2" height="2" fill="#000"/><rect x="6.5" y="6.5" width="2" height="2" fill="#f00"/><rect x="10.0" y="6.5" width="2" height="2" fill="#000"/><rect x="3.0" y="10.0" width="2" height="2" fill="#f00"/><rect x="6.5" y="10.0" width="2" height="2" fill="#000"/><rect x="10.0" y="10.0" width="2" height="2" fill="#f00"/></svg><svg style="left:610px;top:64.5px;" width="16" height="14" viewBox="0 0 16 14"><rect x=".7" y=".7" width="14" height="11.600" fill="#fff" stroke="#000" stroke-width="1.400"/><path d="M4 1v3M7.500 1v4M11 1v3" stroke="#000"/><text x="4.500" y="10.500" font-family="Liberation Sans,sans-serif" font-size="6" font-weight="bold" fill="#0000c0">1 3</text></svg><svg style="left:4px;top:85px;" width="795" height="516" viewBox="0 0 795 516"><defs><pattern id="hk" width="5" height="5" patternUnits="userSpaceOnUse" patternTransform="rotate(45)"><rect x="0" y="0" width="5" height=".8" fill="#000"/></pattern><pattern id="hc" width="5" height="5" patternUnits="userSpaceOnUse" patternTransform="rotate(45)"><rect x="0" y="0" width="5" height=".8" fill="#00ffff"/></pattern><pattern id="hm" width="5" height="5" patternUnits="userSpaceOnUse" patternTransform="rotate(45)"><rect x="0" y="0" width="5" height=".8" fill="#ff00ff"/></pattern><pattern id="hb" width="5" height="5" patternUnits="userSpaceOnUse" patternTransform="rotate(45)"><rect x="0" y="0" width="5" height=".8" fill="#0000ff"/></pattern><pattern id="hg" width="5" height="5" patternUnits="userSpaceOnUse" patternTransform="rotate(45)"><rect x="0" y="0" width="5" height=".8" fill="#00ff00"/></pattern></defs><g stroke-width="1" shape-rendering="crispEdges"><polygon points="228.0,57.7 234.1,55.6 234.3,58.9 229.1,60.8" fill="url(#hk)" stroke="#000"/><polygon points="249.7,39.5 250.7,43.3 246.2,43.9 245.4,40.7" fill="none" stroke="#00ffff"/><polygon points="270.1,103.1 272.1,110.8 268.8,110.9 267.1,103.9" fill="url(#hk)" stroke="#000"/><polygon points="243.4,89.9 249.1,87.5 251.2,91.6 245.2,94.1" fill="none" stroke="#000"/><polygon points="263.0,199.3 264.5,205.9 260.5,206.6 259.1,200.1" fill="url(#hm)" stroke="#ff00ff"/><polygon points="252.3,34.2 258.5,32.1 260.0,37.6 254.2,39.6" fill="none" stroke="#00ffff"/><polygon points="265.5,117.6 272.3,115.0 273.7,121.2 267.7,123.5" fill="none" stroke="#00ffff"/><polygon points="333.3,189.5 334.8,194.0 330.6,195.2 329.2,190.7" fill="url(#hk)" stroke="#000"/><polygon points="198.7,76.0 203.4,73.6 206.2,79.0 201.4,81.4" fill="none" stroke="#ff00ff"/><polygon points="246.5,95.0 249.8,101.8 243.8,104.0 240.8,97.8" fill="url(#hk)" stroke="#000"/><polygon points="233.8,140.0 241.1,137.4 243.3,142.4 235.6,145.1" fill="none" stroke="#000"/><polygon points="242.8,45.1 245.7,50.8 242.5,51.7 240.0,46.6" fill="url(#hk)" stroke="#000"/><polygon points="200.5,98.1 201.7,101.5 195.7,102.9 194.8,99.9" fill="url(#hk)" stroke="#000"/><polygon points="200.0,93.1 202.0,97.4 197.1,100.7 194.7,95.7" fill="url(#hc)" stroke="#00ffff"/><polygon points="309.5,166.3 313.7,164.3 315.6,168.1 311.3,170.2" fill="url(#hm)" stroke="#ff00ff"/><polygon points="332.6,194.3 334.5,201.1 328.9,202.8 326.9,195.9" fill="url(#hk)" stroke="#000"/><polygon points="213.4,72.3 217.6,70.9 219.4,74.2 214.6,75.8" fill="none" stroke="#000"/><polygon points="250.8,62.6 257.6,60.8 258.5,64.8 251.8,66.6" fill="none" stroke="#000"/><polygon points="217.7,85.2 221.8,83.4 223.2,88.3 219.7,89.8" fill="url(#hm)" stroke="#ff00ff"/><polygon points="316.9,127.6 322.1,124.8 323.8,129.4 319.2,131.8" fill="none" stroke="#000"/><polygon points="204.8,121.7 211.0,119.1 213.0,123.6 206.7,126.3" fill="url(#hm)" stroke="#ff00ff"/><polygon points="254.8,138.7 261.3,136.2 263.5,142.0 257.0,144.5" fill="none" stroke="#000"/><polygon points="247.2,132.5 252.6,130.8 255.3,136.6 249.1,138.5" fill="none" stroke="#000"/><polygon points="325.4,193.5 326.8,197.3 323.4,198.0 322.2,194.7" fill="none" stroke="#000"/><polygon points="237.9,124.5 245.1,121.1 247.6,126.4 240.4,129.8" fill="url(#hk)" stroke="#000"/><polygon points="261.8,36.4 263.5,44.1 257.8,44.9 256.2,37.6" fill="none" stroke="#000"/><polygon points="225.9,50.5 227.3,55.7 221.1,56.6 219.9,52.1" fill="none" stroke="#ff00ff"/><polygon points="248.3,38.1 250.3,45.5 245.5,47.6 243.3,39.4" fill="none" stroke="#000"/><polygon points="252.7,91.8 255.1,97.3 249.4,99.9 247.0,94.3" fill="url(#hk)" stroke="#000"/><polygon points="209.9,88.8 214.4,86.8 216.0,92.3 212.2,94.0" fill="url(#hk)" stroke="#000"/><polygon points="294.7,135.6 295.7,139.8 291.3,141.5 290.2,136.6" fill="url(#hk)" stroke="#000"/><polygon points="254.6,164.5 262.3,162.5 263.6,166.5 255.7,168.6" fill="url(#hk)" stroke="#000"/><polygon points="218.7,58.2 222.5,57.3 223.5,63.2 220.2,64.0" fill="url(#hk)" stroke="#000"/><polygon points="248.8,58.2 254.2,57.0 255.1,60.8 249.7,62.0" fill="none" stroke="#000"/><polygon points="227.0,97.9 230.3,96.7 231.3,100.9 228.5,102.0" fill="url(#hk)" stroke="#000"/><polygon points="219.5,45.8 224.2,43.3 225.2,46.4 221.0,48.6" fill="url(#hc)" stroke="#00ffff"/><polygon points="291.3,157.9 297.6,155.4 300.7,160.7 293.6,163.6" fill="none" stroke="#000"/><polygon points="310.2,202.6 311.8,208.7 306.4,210.2 304.8,204.1" fill="none" stroke="#000"/><polygon points="299.9,191.3 305.7,189.5 307.0,195.5 301.7,197.1" fill="url(#hk)" stroke="#000"/><polygon points="232.9,47.7 239.8,45.5 241.7,50.1 234.4,52.5" fill="url(#hk)" stroke="#000"/><polygon points="259.1,131.5 260.9,137.7 257.6,137.8 256.0,132.4" fill="none" stroke="#000"/><polygon points="326.2,125.3 331.2,123.8 332.8,128.2 327.6,129.8" fill="url(#hc)" stroke="#00ffff"/><polygon points="205.9,74.9 208.1,81.4 204.0,81.9 202.1,76.2" fill="none" stroke="#000"/><polygon points="283.7,161.7 288.2,160.0 289.2,164.8 285.4,166.2" fill="url(#hm)" stroke="#ff00ff"/><polygon points="302.7,221.0 307.7,218.7 308.8,222.5 304.3,224.6" fill="url(#hc)" stroke="#00ffff"/><polygon points="255.6,204.3 262.1,202.7 262.1,206.7 256.5,208.0" fill="url(#hk)" stroke="#000"/><polygon points="247.9,87.3 251.7,85.6 252.4,89.9 249.5,91.1" fill="none" stroke="#ff00ff"/><polygon points="286.9,207.2 291.4,205.4 293.1,209.4 288.5,211.2" fill="url(#hk)" stroke="#000"/><polygon points="217.0,80.5 222.4,78.4 224.5,81.5 218.4,83.9" fill="none" stroke="#ff00ff"/><polygon points="316.1,215.1 321.4,212.3 323.8,217.3 318.6,220.0" fill="none" stroke="#ff00ff"/><polygon points="256.0,93.8 257.1,98.5 251.7,100.0 250.6,95.0" fill="none" stroke="#000"/><polygon points="239.7,60.1 243.8,59.2 244.1,62.9 240.5,63.8" fill="none" stroke="#ff00ff"/><polygon points="251.2,53.3 252.9,57.3 249.6,58.1 248.1,54.5" fill="none" stroke="#000"/><polygon points="245.8,107.2 248.0,112.7 243.9,113.9 241.8,108.9" fill="url(#hb)" stroke="#0000ff"/><polygon points="258.7,149.8 261.7,156.6 258.2,157.9 255.3,151.3" fill="none" stroke="#000"/><polygon points="308.1,201.6 311.6,200.6 312.4,203.6 309.0,204.6" fill="url(#hc)" stroke="#00ffff"/><polygon points="306.8,194.7 310.3,201.8 306.9,203.5 303.4,196.4" fill="none" stroke="#00ffff"/><polygon points="292.3,153.4 294.6,160.0 290.4,162.0 287.9,154.9" fill="none" stroke="#000"/><polygon points="203.2,74.3 206.0,80.0 201.2,82.5 198.3,76.7" fill="url(#hc)" stroke="#00ffff"/><polygon points="214.2,146.9 217.5,145.7 219.2,149.4 215.6,150.7" fill="url(#hm)" stroke="#ff00ff"/><polygon points="219.2,72.7 222.3,79.9 217.2,82.1 214.2,74.9" fill="url(#hc)" stroke="#00ffff"/><polygon points="184.5,94.3 189.4,92.0 192.1,96.7 186.8,99.2" fill="url(#hk)" stroke="#000"/><polygon points="254.5,64.0 258.8,62.7 259.5,67.1 255.9,68.3" fill="url(#hk)" stroke="#000"/><polygon points="227.7,64.4 234.5,60.8 236.9,65.9 230.3,69.4" fill="url(#hk)" stroke="#000"/><polygon points="225.8,94.1 227.5,101.7 224.1,102.2 222.4,94.9" fill="none" stroke="#ff00ff"/><polygon points="249.3,34.6 250.6,40.1 246.4,40.8 245.1,35.6" fill="url(#hm)" stroke="#ff00ff"/><polygon points="292.2,206.3 297.1,205.2 297.5,209.2 293.1,210.2" fill="url(#hc)" stroke="#00ffff"/><polygon points="297.7,207.0 300.6,212.6 295.0,215.5 292.1,209.9" fill="none" stroke="#0000ff"/><polygon points="242.7,75.0 243.9,80.3 239.4,82.0 238.1,76.1" fill="none" stroke="#00ffff"/><polygon points="233.6,88.3 235.9,92.9 231.0,95.9 228.5,90.9" fill="url(#hk)" stroke="#000"/><polygon points="312.7,225.1 316.9,223.0 318.7,225.8 314.2,228.1" fill="url(#hk)" stroke="#000"/><polygon points="279.7,176.8 286.2,173.6 288.2,178.6 282.0,181.6" fill="url(#hc)" stroke="#00ffff"/><polygon points="217.2,74.9 221.1,73.5 222.9,79.3 219.1,80.6" fill="url(#hg)" stroke="#00ff00"/><polygon points="200.4,118.8 202.1,125.8 196.2,126.7 194.6,120.1" fill="url(#hk)" stroke="#000"/><polygon points="324.7,143.5 332.1,141.6 332.7,145.9 325.7,147.7" fill="none" stroke="#ff00ff"/><polygon points="235.6,55.1 239.8,53.7 240.5,57.6 236.8,58.8" fill="url(#hk)" stroke="#000"/><polygon points="230.4,64.4 233.6,70.7 229.1,72.8 226.0,66.6" fill="none" stroke="#00ffff"/><polygon points="221.1,88.8 228.5,86.3 229.7,90.2 222.5,92.7" fill="none" stroke="#ff00ff"/><polygon points="233.7,67.4 239.7,64.2 241.3,67.6 235.4,70.7" fill="url(#hm)" stroke="#ff00ff"/><polygon points="260.5,54.3 261.6,59.0 256.9,60.0 255.8,55.4" fill="none" stroke="#ff00ff"/><polygon points="214.3,48.6 217.0,55.9 211.2,58.9 208.3,50.8" fill="none" stroke="#000"/><polygon points="272.9,191.2 276.8,189.4 279.8,194.4 275.3,196.4" fill="url(#hm)" stroke="#ff00ff"/><polygon points="216.4,104.4 219.0,109.6 215.2,111.9 212.5,106.3" fill="url(#hm)" stroke="#ff00ff"/><polygon points="264.4,177.6 267.7,176.0 270.4,181.3 267.0,183.0" fill="url(#hc)" stroke="#00ffff"/><polygon points="251.8,113.1 253.1,116.5 248.4,118.7 247.0,114.9" fill="url(#hm)" stroke="#ff00ff"/><polygon points="210.8,120.2 212.3,123.9 209.0,125.0 207.6,121.4" fill="url(#hk)" stroke="#000"/><polygon points="289.8,183.0 295.2,181.0 297.1,183.7 290.8,186.0" fill="none" stroke="#000"/><polygon points="325.4,125.2 332.5,121.9 335.9,127.1 328.1,130.8" fill="url(#hk)" stroke="#000"/><polygon points="214.7,77.1 217.4,82.2 213.4,83.5 211.1,79.0" fill="none" stroke="#ff00ff"/><polygon points="330.9,141.3 333.9,147.1 330.0,148.4 327.3,143.3" fill="url(#hc)" stroke="#00ffff"/><polygon points="261.1,204.6 262.3,208.5 258.4,208.7 257.5,205.7" fill="url(#hk)" stroke="#000"/><polygon points="232.7,71.8 238.3,69.3 240.4,73.9 234.8,76.4" fill="none" stroke="#000"/><polygon points="217.0,55.8 220.8,54.8 221.9,60.0 218.3,60.9" fill="url(#hk)" stroke="#000"/><polygon points="276.4,138.9 281.2,137.1 283.5,141.9 278.3,143.8" fill="none" stroke="#000"/><polygon points="240.9,73.9 244.2,72.1 247.7,76.8 243.6,78.9" fill="url(#hk)" stroke="#000"/><polygon points="270.1,128.1 275.9,125.4 278.0,130.8 272.6,133.4" fill="none" stroke="#000"/><polygon points="297.9,168.7 301.3,167.7 303.4,173.3 299.6,174.4" fill="url(#hk)" stroke="#000"/><polygon points="196.5,73.0 200.0,71.9 201.8,75.8 197.6,77.0" fill="url(#hc)" stroke="#00ffff"/><polygon points="261.9,114.4 268.3,111.6 271.1,115.6 263.8,118.8" fill="none" stroke="#000"/><polygon points="326.5,173.8 328.5,178.3 323.2,181.4 320.9,176.1" fill="none" stroke="#00ffff"/><polygon points="279.2,221.8 284.6,220.1 286.2,225.9 281.0,227.5" fill="none" stroke="#00ffff"/><polygon points="230.0,66.9 231.5,73.1 228.1,72.9 226.8,67.7" fill="none" stroke="#000"/><polygon points="232.5,55.4 236.0,54.3 237.3,57.2 233.5,58.4" fill="url(#hc)" stroke="#00ffff"/><polygon points="301.6,191.3 308.9,189.4 310.5,192.3 302.4,194.4" fill="url(#hk)" stroke="#000"/><polygon points="312.0,186.5 313.9,192.5 308.1,193.6 306.4,188.3" fill="none" stroke="#000"/><polygon points="214.1,88.7 216.2,93.7 213.6,95.3 211.2,90.0" fill="url(#hk)" stroke="#000"/><polygon points="323.2,128.2 329.7,124.8 331.9,129.4 325.5,132.7" fill="url(#hm)" stroke="#ff00ff"/><polygon points="285.4,133.9 289.4,131.9 291.5,137.6 288.0,139.3" fill="url(#hk)" stroke="#000"/><polygon points="294.9,222.0 298.2,220.8 299.2,225.4 296.5,226.4" fill="url(#hk)" stroke="#000"/><polygon points="254.2,49.2 260.4,47.6 261.8,50.6 255.1,52.4" fill="url(#hc)" stroke="#00ffff"/><polygon points="243.9,102.9 245.7,110.2 242.3,110.4 240.7,103.7" fill="none" stroke="#000"/><polygon points="254.0,103.4 261.0,100.8 262.8,104.2 255.4,107.0" fill="none" stroke="#ff00ff"/><polygon points="232.4,91.1 236.4,89.9 237.5,95.7 234.2,96.8" fill="none" stroke="#000"/><polygon points="220.7,63.3 221.9,68.0 216.5,68.7 215.4,64.6" fill="url(#hk)" stroke="#000"/><polygon points="258.5,58.9 263.4,57.9 263.4,61.6 259.3,62.5" fill="url(#hb)" stroke="#0000ff"/><polygon points="244.6,67.0 250.4,64.4 251.0,67.8 246.0,70.1" fill="none" stroke="#000"/><polygon points="283.2,127.4 288.9,124.6 290.7,128.9 285.2,131.6" fill="none" stroke="#ff00ff"/><polygon points="284.0,197.2 290.1,194.9 292.2,199.7 285.9,202.1" fill="url(#hk)" stroke="#000"/><polygon points="296.7,170.0 302.6,167.7 304.2,171.2 298.1,173.6" fill="none" stroke="#000"/><polygon points="241.5,121.7 244.1,129.2 241.3,130.7 238.5,122.8" fill="url(#hb)" stroke="#0000ff"/><polygon points="194.4,141.3 200.0,139.3 202.5,144.3 196.3,146.5" fill="url(#hc)" stroke="#00ffff"/><polygon points="188.5,82.4 193.4,80.5 194.9,83.2 189.6,85.3" fill="url(#hk)" stroke="#000"/><polygon points="325.9,130.3 327.5,134.4 321.8,135.9 320.5,132.4" fill="none" stroke="#ff00ff"/><polygon points="274.8,120.6 280.7,119.3 281.8,123.0 275.6,124.3" fill="none" stroke="#ff00ff"/><polygon points="249.9,86.0 255.7,84.5 257.2,87.6 250.8,89.3" fill="url(#hk)" stroke="#000"/><polygon points="221.9,110.7 223.1,114.9 220.1,115.2 219.0,111.6" fill="url(#hk)" stroke="#000"/><polygon points="319.8,196.5 323.4,195.6 324.1,201.5 321.2,202.2" fill="none" stroke="#ff00ff"/><polygon points="218.0,47.0 222.0,45.9 222.3,49.8 219.0,50.7" fill="none" stroke="#ff00ff"/><polygon points="270.3,182.2 276.6,180.4 277.6,186.5 271.9,188.1" fill="url(#hc)" stroke="#00ffff"/><polygon points="312.5,138.3 316.7,136.3 317.5,140.1 314.1,141.8" fill="url(#hk)" stroke="#000"/><polygon points="252.7,126.4 257.9,123.6 260.7,128.9 255.5,131.7" fill="none" stroke="#00ffff"/><polygon points="270.3,163.3 277.8,161.7 278.6,165.7 271.1,167.4" fill="url(#hm)" stroke="#ff00ff"/><polygon points="287.3,151.2 291.9,149.3 294.2,154.9 289.5,156.8" fill="url(#hm)" stroke="#ff00ff"/><polygon points="244.4,111.0 249.9,108.6 252.0,114.1 246.7,116.4" fill="url(#hk)" stroke="#000"/><polygon points="229.6,89.8 234.2,88.3 234.8,93.4 231.1,94.6" fill="none" stroke="#00ffff"/><polygon points="270.0,157.8 276.7,155.6 278.9,161.4 271.9,163.6" fill="none" stroke="#00ffff"/><polygon points="283.1,115.7 286.0,122.0 283.2,123.9 280.1,117.1" fill="none" stroke="#ff00ff"/><polygon points="298.1,139.4 302.4,137.7 303.8,141.5 299.5,143.2" fill="none" stroke="#00ffff"/><polygon points="300.1,142.8 306.9,139.3 309.2,143.2 302.2,146.9" fill="none" stroke="#ff00ff"/><polygon points="255.9,107.6 257.5,111.2 252.3,112.5 251.1,109.8" fill="none" stroke="#000"/><polygon points="286.3,198.6 292.8,196.5 293.7,199.6 287.3,201.7" fill="url(#hm)" stroke="#ff00ff"/><polygon points="191.2,89.3 197.8,87.6 197.8,91.3 192.1,92.8" fill="none" stroke="#000"/><polygon points="274.3,109.4 279.4,108.2 280.8,113.8 275.5,115.0" fill="url(#hk)" stroke="#000"/><polygon points="304.8,146.6 309.5,145.5 311.0,149.7 305.9,151.0" fill="none" stroke="#00ffff"/><polygon points="302.8,203.1 306.4,202.2 308.1,207.8 304.4,208.8" fill="none" stroke="#000"/><polygon points="299.7,164.8 306.5,161.3 308.9,164.8 301.6,168.5" fill="none" stroke="#000"/><polygon points="270.7,163.0 275.8,160.7 277.9,163.9 272.2,166.4" fill="url(#hk)" stroke="#000"/><polygon points="301.2,180.5 305.6,179.5 306.8,184.3 302.4,185.4" fill="none" stroke="#000"/><polygon points="208.3,64.8 212.3,63.1 214.2,68.2 210.4,69.8" fill="url(#hk)" stroke="#000"/><polygon points="235.0,48.0 240.7,45.3 242.9,50.6 237.5,53.2" fill="url(#hk)" stroke="#000"/><polygon points="309.5,124.2 315.3,122.6 317.2,126.1 310.5,128.0" fill="none" stroke="#ff00ff"/><polygon points="326.7,207.3 328.1,210.8 323.8,213.5 322.0,209.2" fill="none" stroke="#000"/><polygon points="280.0,215.5 282.3,221.6 278.5,224.0 275.9,217.0" fill="url(#hg)" stroke="#00ff00"/><polygon points="316.1,193.2 319.6,192.2 322.2,197.4 317.7,198.7" fill="url(#hk)" stroke="#000"/><polygon points="272.8,176.9 274.4,180.6 270.6,182.2 269.0,178.6" fill="url(#hk)" stroke="#000"/><polygon points="323.4,197.2 326.1,204.2 323.1,206.3 320.1,198.5" fill="none" stroke="#ff00ff"/><polygon points="252.0,91.8 254.2,98.7 249.6,99.6 247.5,93.2" fill="none" stroke="#000"/><polygon points="246.6,55.8 248.4,60.2 242.9,62.4 241.1,58.1" fill="none" stroke="#000"/><polygon points="251.8,84.4 256.1,82.7 258.4,85.7 253.2,87.8" fill="url(#hm)" stroke="#ff00ff"/><polygon points="236.3,53.4 237.5,56.7 231.9,58.6 230.8,55.4" fill="url(#hm)" stroke="#ff00ff"/><polygon points="271.5,126.1 276.0,124.6 277.7,127.9 272.6,129.6" fill="url(#hc)" stroke="#00ffff"/><polygon points="309.9,124.3 313.3,123.1 315.0,129.0 312.1,130.1" fill="none" stroke="#000"/><polygon points="234.6,59.7 239.2,57.2 241.4,61.8 237.0,64.2" fill="url(#hk)" stroke="#000"/><polygon points="253.5,129.9 258.7,127.1 260.5,131.7 255.7,134.2" fill="url(#hk)" stroke="#000"/><polygon points="265.8,131.8 272.3,130.1 272.2,133.6 266.7,135.0" fill="url(#hk)" stroke="#000"/><polygon points="255.3,82.8 259.0,81.1 261.5,84.7 257.3,86.8" fill="none" stroke="#000"/><polygon points="237.0,111.2 243.8,108.5 246.1,112.8 238.8,115.7" fill="url(#hk)" stroke="#000"/><polygon points="228.7,113.2 236.4,111.4 238.5,116.9 230.1,118.9" fill="url(#hk)" stroke="#000"/><polygon points="221.3,108.7 223.5,114.7 219.4,116.0 217.3,110.1" fill="url(#hk)" stroke="#000"/><polygon points="312.9,203.3 316.3,201.8 318.0,206.8 315.0,208.1" fill="none" stroke="#00ffff"/><polygon points="256.7,114.4 263.8,111.4 264.7,115.4 258.3,118.1" fill="none" stroke="#00ffff"/><polygon points="261.1,78.1 263.5,83.2 258.8,84.6 256.7,80.2" fill="url(#hk)" stroke="#000"/><polygon points="223.7,74.8 227.5,73.8 228.9,78.5 225.0,79.5" fill="url(#hc)" stroke="#00ffff"/><polygon points="250.5,89.1 254.9,87.5 256.3,91.0 251.8,92.7" fill="url(#hk)" stroke="#000"/><polygon points="263.0,124.3 267.4,122.4 269.3,128.6 265.6,130.2" fill="none" stroke="#000"/><polygon points="250.4,37.3 251.9,42.3 247.4,43.0 246.1,38.5" fill="none" stroke="#0000ff"/><polygon points="202.9,93.6 207.8,92.1 210.0,97.0 204.6,98.7" fill="none" stroke="#000"/><polygon points="291.0,178.0 296.4,176.4 297.3,182.1 292.6,183.5" fill="url(#hm)" stroke="#ff00ff"/><polygon points="294.1,143.1 299.5,141.2 302.1,147.1 296.2,149.1" fill="none" stroke="#ff00ff"/><polygon points="236.3,117.0 241.4,114.8 243.7,119.9 238.5,122.1" fill="url(#hk)" stroke="#000"/><polygon points="255.1,115.9 259.0,114.0 260.9,117.6 256.9,119.6" fill="none" stroke="#000"/><polygon points="209.6,113.7 216.3,110.2 217.7,112.9 211.0,116.4" fill="none" stroke="#ff00ff"/><polygon points="256.7,130.7 262.8,128.2 264.2,132.3 258.4,134.7" fill="none" stroke="#0000ff"/><polygon points="235.6,106.5 241.5,105.0 242.7,109.9 236.8,111.3" fill="none" stroke="#000"/><polygon points="260.0,189.6 264.2,188.7 265.1,192.7 260.9,193.6" fill="none" stroke="#000"/><polygon points="247.6,56.2 249.2,60.7 244.5,61.8 243.1,57.8" fill="none" stroke="#00ffff"/><polygon points="305.6,144.6 311.7,142.4 312.6,146.0 306.9,148.1" fill="url(#hc)" stroke="#00ffff"/><polygon points="329.4,142.5 334.2,140.2 335.0,143.6 330.9,145.6" fill="url(#hk)" stroke="#000"/><polygon points="262.5,188.5 265.4,194.1 260.4,197.2 257.4,191.2" fill="none" stroke="#000"/><polygon points="233.4,60.8 238.0,59.7 238.5,63.0 234.2,64.1" fill="url(#hk)" stroke="#000"/><polygon points="271.6,216.4 273.9,221.4 269.5,224.3 266.9,218.5" fill="url(#hm)" stroke="#ff00ff"/><polygon points="314.9,189.2 319.6,188.2 321.6,192.9 316.0,194.2" fill="url(#hk)" stroke="#000"/><polygon points="256.5,183.7 258.2,188.0 255.2,190.2 253.1,185.1" fill="none" stroke="#000"/><polygon points="201.0,131.4 203.4,136.1 199.7,138.7 197.1,133.4" fill="url(#hk)" stroke="#000"/><polygon points="209.0,83.9 213.4,82.5 213.7,85.7 210.0,86.9" fill="url(#hc)" stroke="#00ffff"/><polygon points="197.6,115.6 204.2,112.5 207.1,117.5 200.1,120.8" fill="none" stroke="#000"/><polygon points="259.6,70.3 261.2,75.6 258.1,77.4 256.3,71.3" fill="url(#hc)" stroke="#00ffff"/><polygon points="198.0,129.5 203.7,127.9 205.1,131.6 199.1,133.3" fill="url(#hc)" stroke="#00ffff"/><polygon points="238.3,43.3 242.3,41.6 243.9,47.4 240.7,48.8" fill="url(#hc)" stroke="#00ffff"/><polygon points="259.1,84.8 260.7,88.3 257.2,90.4 255.4,86.5" fill="url(#hk)" stroke="#000"/><polygon points="312.7,199.4 316.3,197.6 318.4,200.9 314.5,203.0" fill="url(#hk)" stroke="#000"/><polygon points="278.6,166.0 282.9,164.2 284.5,170.0 280.9,171.5" fill="none" stroke="#000"/><polygon points="293.7,168.2 295.3,171.5 292.3,172.5 290.9,169.5" fill="url(#hk)" stroke="#000"/><polygon points="265.6,169.8 270.1,168.5 270.5,173.1 267.0,174.2" fill="none" stroke="#ff00ff"/><polygon points="308.6,148.6 311.9,146.9 313.1,150.6 310.3,152.0" fill="none" stroke="#ff00ff"/><polygon points="180.8,196.1 182.2,201.2 176.5,201.8 175.4,197.5" fill="url(#hb)" stroke="#0000ff"/><polygon points="241.5,210.1 247.1,207.2 249.1,211.4 243.6,214.2" fill="none" stroke="#000"/><polygon points="185.2,202.5 186.1,206.1 180.9,207.6 179.9,203.9" fill="none" stroke="#0000ff"/><polygon points="176.7,167.9 178.8,172.8 175.6,174.6 173.3,169.3" fill="url(#hc)" stroke="#00ffff"/><polygon points="216.8,216.7 218.0,221.6 214.1,222.7 212.8,217.6" fill="none" stroke="#000"/><polygon points="223.1,203.0 227.1,201.7 229.3,206.6 224.7,208.1" fill="url(#hm)" stroke="#ff00ff"/><polygon points="200.1,168.6 201.9,172.7 199.1,174.3 197.2,169.9" fill="url(#hk)" stroke="#000"/><polygon points="203.5,177.3 205.9,181.8 203.1,184.3 200.3,178.9" fill="url(#hm)" stroke="#ff00ff"/><polygon points="239.7,222.8 245.4,220.7 246.0,224.1 240.9,226.0" fill="url(#hc)" stroke="#00ffff"/><polygon points="265.8,191.2 267.7,197.2 261.6,198.6 259.9,193.1" fill="url(#hk)" stroke="#000"/><polygon points="246.1,210.5 250.7,209.0 252.7,212.3 247.2,214.0" fill="none" stroke="#000"/><polygon points="251.8,202.2 256.6,201.0 257.3,204.6 252.8,205.8" fill="url(#hc)" stroke="#00ffff"/><polygon points="170.3,186.7 176.4,184.9 178.9,190.3 172.0,192.3" fill="url(#hk)" stroke="#000"/><polygon points="180.1,141.2 181.7,146.5 178.4,148.2 176.6,142.2" fill="none" stroke="#ff00ff"/><polygon points="234.2,183.2 239.3,181.3 241.4,185.0 235.7,187.1" fill="url(#hm)" stroke="#ff00ff"/><polygon points="200.8,174.6 203.3,180.1 199.4,181.5 197.0,176.4" fill="none" stroke="#000"/><polygon points="235.2,206.5 236.4,210.1 231.3,211.9 230.1,208.2" fill="url(#hb)" stroke="#0000ff"/><polygon points="202.8,214.1 206.2,213.1 206.5,216.8 203.8,217.6" fill="url(#hc)" stroke="#00ffff"/><polygon points="230.5,172.3 232.6,177.8 227.8,179.0 225.8,174.2" fill="url(#hm)" stroke="#ff00ff"/><polygon points="192.4,148.2 198.0,146.1 198.8,150.0 193.8,151.8" fill="url(#hc)" stroke="#00ffff"/><polygon points="175.8,173.5 179.5,172.6 181.0,176.9 176.9,177.9" fill="url(#hm)" stroke="#ff00ff"/><polygon points="195.7,169.6 197.2,172.8 192.8,175.3 191.1,171.7" fill="none" stroke="#000"/><polygon points="235.6,210.6 237.1,216.4 231.2,218.4 229.6,212.1" fill="none" stroke="#000"/><polygon points="236.9,208.9 240.8,207.7 242.4,211.7 238.1,213.0" fill="none" stroke="#000"/><polygon points="176.3,186.3 183.2,184.6 183.5,188.1 177.1,189.6" fill="url(#hk)" stroke="#000"/><polygon points="253.0,189.3 256.6,187.6 257.4,190.6 254.4,192.1" fill="url(#hc)" stroke="#00ffff"/><polygon points="220.3,197.8 226.6,194.5 228.9,200.4 223.2,203.4" fill="none" stroke="#000"/><polygon points="189.5,205.9 191.8,212.0 187.9,214.2 185.4,207.4" fill="none" stroke="#000"/><polygon points="258.8,189.5 262.2,188.1 263.7,191.4 260.2,192.9" fill="url(#hk)" stroke="#000"/><polygon points="167.7,189.1 172.4,187.3 172.6,190.5 168.8,192.0" fill="none" stroke="#000"/><polygon points="194.5,163.0 199.9,161.2 202.0,164.6 195.7,166.7" fill="url(#hg)" stroke="#00ff00"/><polygon points="222.8,204.2 229.8,201.9 231.3,207.4 224.5,209.6" fill="none" stroke="#000"/><polygon points="244.2,201.8 249.5,199.6 251.4,204.5 246.2,206.6" fill="url(#hk)" stroke="#000"/><polygon points="220.0,169.0 221.8,173.2 217.8,173.8 216.5,170.5" fill="url(#hm)" stroke="#ff00ff"/><polygon points="212.5,188.3 216.8,186.1 218.1,189.4 214.1,191.5" fill="none" stroke="#00ffff"/><polygon points="261.6,188.9 265.2,187.7 266.1,191.2 262.7,192.3" fill="url(#hm)" stroke="#ff00ff"/><polygon points="220.0,213.5 222.2,217.7 218.6,219.1 216.6,215.3" fill="url(#hc)" stroke="#00ffff"/><polygon points="227.9,212.7 234.1,210.9 235.3,214.4 228.9,216.3" fill="none" stroke="#000"/><polygon points="180.2,154.8 185.8,153.0 187.1,159.0 182.0,160.6" fill="none" stroke="#000"/><polygon points="232.3,174.7 238.2,171.7 239.3,175.8 234.2,178.4" fill="url(#hc)" stroke="#00ffff"/><polygon points="176.1,188.6 179.1,194.7 175.0,195.9 172.3,190.5" fill="url(#hm)" stroke="#ff00ff"/><polygon points="227.7,192.7 229.5,198.6 225.6,200.2 223.7,193.8" fill="none" stroke="#ff00ff"/><polygon points="197.0,205.4 204.2,202.2 206.9,206.1 198.8,209.6" fill="url(#hk)" stroke="#000"/><polygon points="219.9,192.2 221.4,199.0 217.3,200.4 215.7,193.1" fill="url(#hk)" stroke="#000"/><polygon points="180.0,145.0 185.2,142.6 187.1,147.2 182.1,149.5" fill="url(#hk)" stroke="#000"/><polygon points="246.2,215.9 247.3,220.0 244.6,221.8 243.2,216.8" fill="none" stroke="#000"/><polygon points="206.5,205.1 207.8,210.5 203.9,211.9 202.4,206.0" fill="none" stroke="#000"/><polygon points="208.3,212.0 211.8,210.6 214.5,214.9 210.1,216.6" fill="url(#hc)" stroke="#00ffff"/><polygon points="192.4,162.4 197.4,160.2 199.2,163.5 194.0,165.9" fill="none" stroke="#000"/><polygon points="243.7,209.0 248.2,207.3 249.0,211.5 245.1,212.9" fill="none" stroke="#00ffff"/><polygon points="212.1,188.7 219.4,186.9 220.8,190.4 213.0,192.4" fill="url(#hm)" stroke="#ff00ff"/><polygon points="186.5,200.4 187.7,204.2 184.1,204.9 183.1,201.5" fill="none" stroke="#ff00ff"/><polygon points="248.1,197.5 251.5,196.0 252.7,200.7 250.1,201.8" fill="none" stroke="#000"/><polygon points="199.4,213.6 203.1,211.8 204.5,216.3 201.5,217.8" fill="url(#hc)" stroke="#00ffff"/><polygon points="242.7,181.8 246.5,180.4 247.6,184.5 244.1,185.7" fill="none" stroke="#000"/><polygon points="260.8,199.5 262.7,203.9 259.0,204.5 257.5,201.0" fill="url(#hk)" stroke="#000"/><polygon points="224.3,169.4 227.7,168.3 229.4,173.5 225.9,174.6" fill="none" stroke="#00ffff"/><polygon points="255.9,200.3 260.9,198.4 262.2,202.3 257.4,204.2" fill="url(#hk)" stroke="#000"/><polygon points="166.3,191.4 173.6,189.0 174.3,192.9 167.5,195.1" fill="url(#hk)" stroke="#000"/><polygon points="251.9,206.4 259.2,204.2 260.4,207.2 252.8,209.5" fill="url(#hc)" stroke="#00ffff"/><polygon points="248.0,209.3 249.2,215.0 244.3,216.3 243.0,210.4" fill="url(#hm)" stroke="#ff00ff"/><polygon points="231.1,185.2 235.2,183.4 237.2,188.1 233.1,189.9" fill="url(#hc)" stroke="#00ffff"/><polygon points="221.1,208.2 225.6,207.0 226.7,210.4 222.1,211.6" fill="none" stroke="#ff00ff"/><polygon points="208.9,206.9 212.0,213.4 208.5,214.2 205.8,208.4" fill="none" stroke="#000"/><polygon points="220.8,177.3 224.6,176.5 225.4,180.8 221.7,181.6" fill="none" stroke="#000"/><polygon points="204.8,169.3 209.5,167.1 210.0,170.2 206.1,172.1" fill="none" stroke="#000"/><polygon points="194.6,166.6 198.7,164.5 202.0,169.5 197.3,171.9" fill="url(#hk)" stroke="#000"/><polygon points="247.8,192.4 252.7,190.5 254.2,193.3 249.0,195.3" fill="url(#hk)" stroke="#000"/><polygon points="233.0,207.9 237.8,206.2 238.6,210.5 234.4,212.0" fill="none" stroke="#0000ff"/><polygon points="205.1,196.0 209.9,194.7 210.9,197.8 206.0,199.2" fill="none" stroke="#000"/><polygon points="214.0,209.9 219.2,208.6 220.3,213.2 215.1,214.4" fill="none" stroke="#000"/><polygon points="235.4,202.5 240.5,200.9 241.9,203.8 236.3,205.5" fill="url(#hm)" stroke="#ff00ff"/><polygon points="136.6,218.2 143.1,215.0 144.7,217.9 138.1,221.2" fill="none" stroke="#000"/><polygon points="161.4,232.5 164.9,231.1 167.8,235.8 163.4,237.5" fill="none" stroke="#ff00ff"/><polygon points="137.8,225.2 139.1,230.9 136.0,231.1 134.9,225.8" fill="url(#hk)" stroke="#000"/><polygon points="167.6,236.6 172.8,233.9 175.5,237.6 169.7,240.5" fill="none" stroke="#ff00ff"/><polygon points="139.7,221.5 143.2,220.1 145.0,224.7 141.5,226.0" fill="url(#hc)" stroke="#00ffff"/><polygon points="163.9,222.6 170.7,219.1 173.1,223.4 166.2,227.0" fill="none" stroke="#000"/><polygon points="141.6,225.0 148.3,223.0 149.7,226.8 142.7,228.9" fill="none" stroke="#000"/><polygon points="152.9,247.6 154.1,251.2 150.0,253.3 148.6,249.0" fill="none" stroke="#000"/><polygon points="134.8,250.2 140.5,248.1 142.8,253.5 136.8,255.7" fill="url(#hk)" stroke="#000"/><polygon points="162.8,265.5 166.2,272.4 163.2,274.5 159.5,267.2" fill="url(#hb)" stroke="#0000ff"/><polygon points="148.0,257.5 154.7,254.5 156.0,258.3 149.7,261.1" fill="url(#hc)" stroke="#00ffff"/><polygon points="164.4,289.6 171.4,287.6 172.2,291.1 165.3,293.0" fill="url(#hk)" stroke="#000"/><polygon points="137.3,262.2 142.5,260.2 143.8,265.6 139.3,267.4" fill="url(#hm)" stroke="#ff00ff"/><polygon points="123.3,289.1 124.9,295.8 120.3,296.9 118.7,290.2" fill="none" stroke="#ff00ff"/><polygon points="138.1,261.7 142.1,260.8 142.5,264.7 139.0,265.6" fill="url(#hm)" stroke="#ff00ff"/><polygon points="146.0,257.7 150.6,255.6 151.9,260.1 147.9,261.9" fill="url(#hm)" stroke="#ff00ff"/><polygon points="135.3,253.6 137.1,259.1 133.9,260.3 132.1,254.6" fill="url(#hk)" stroke="#000"/><polygon points="109.6,359.0 114.4,357.8 115.2,363.7 111.0,364.8" fill="none" stroke="#000"/><polygon points="137.0,265.8 142.2,263.9 143.2,267.4 138.2,269.1" fill="url(#hk)" stroke="#000"/><polygon points="114.0,351.9 119.1,349.2 121.9,354.6 116.9,357.3" fill="none" stroke="#ff00ff"/><polygon points="126.0,310.9 130.3,308.8 132.5,314.5 128.7,316.4" fill="none" stroke="#00ffff"/><polygon points="155.3,257.4 156.3,261.9 151.4,263.2 150.3,258.4" fill="none" stroke="#00ffff"/><polygon points="121.7,344.8 126.7,342.2 129.4,347.7 124.6,350.3" fill="url(#hk)" stroke="#000"/><polygon points="118.7,333.7 121.2,339.7 117.8,340.5 115.5,335.0" fill="url(#hk)" stroke="#000"/><polygon points="155.9,306.1 161.5,304.7 163.1,310.2 157.2,311.6" fill="none" stroke="#000"/><polygon points="104.1,334.3 109.0,333.2 110.3,336.6 104.8,337.8" fill="none" stroke="#000"/><polygon points="128.2,346.5 134.7,343.7 137.1,349.3 130.6,352.1" fill="url(#hb)" stroke="#0000ff"/><polygon points="119.8,346.6 121.4,350.9 118.0,352.2 116.4,347.9" fill="none" stroke="#ff00ff"/><polygon points="149.1,296.4 155.8,294.3 158.1,299.6 150.8,301.9" fill="url(#hk)" stroke="#000"/><polygon points="120.9,320.6 127.3,317.2 129.2,322.7 123.6,325.7" fill="none" stroke="#000"/><polygon points="128.0,321.8 133.1,319.5 135.4,323.0 129.7,325.6" fill="url(#hc)" stroke="#00ffff"/><polygon points="148.4,302.6 154.2,299.8 156.0,305.4 151.0,307.9" fill="url(#hm)" stroke="#ff00ff"/><polygon points="117.4,361.9 122.4,360.7 124.1,364.2 118.3,365.6" fill="url(#hk)" stroke="#000"/><polygon points="136.4,250.8 140.4,249.3 142.2,255.4 138.6,256.7" fill="url(#hk)" stroke="#000"/><polygon points="138.1,350.7 143.8,349.4 145.1,353.5 139.1,354.9" fill="none" stroke="#000"/><polygon points="123.4,328.1 129.4,325.9 131.6,329.7 124.9,332.1" fill="url(#hk)" stroke="#000"/><polygon points="168.9,258.2 175.8,255.8 178.0,260.8 170.7,263.3" fill="none" stroke="#ff00ff"/><polygon points="153.4,255.9 158.3,254.8 158.3,258.3 154.2,259.3" fill="none" stroke="#00ffff"/><polygon points="117.9,339.3 122.4,337.5 124.5,342.0 119.7,343.8" fill="none" stroke="#ff00ff"/><polygon points="139.0,347.6 145.4,344.5 147.9,348.0 140.9,351.4" fill="none" stroke="#000"/><polygon points="129.9,264.3 134.2,262.6 135.4,266.8 131.5,268.4" fill="none" stroke="#000"/><polygon points="135.2,345.2 137.6,351.1 132.6,353.8 129.9,347.5" fill="none" stroke="#000"/><polygon points="147.5,338.0 152.1,336.9 152.7,341.2 148.5,342.2" fill="url(#hc)" stroke="#00ffff"/><polygon points="153.6,256.8 160.2,254.1 161.7,258.9 155.5,261.4" fill="url(#hk)" stroke="#000"/><polygon points="142.4,335.9 144.1,342.3 139.7,343.0 138.1,337.1" fill="none" stroke="#00ffff"/><polygon points="143.6,331.2 150.5,329.7 151.1,334.0 144.6,335.5" fill="none" stroke="#000"/><polygon points="121.9,273.3 128.9,270.8 131.3,275.1 123.6,277.9" fill="url(#hk)" stroke="#000"/><polygon points="133.7,349.8 139.8,347.4 141.2,352.3 135.6,354.5" fill="none" stroke="#ff00ff"/><polygon points="146.8,337.4 152.4,336.1 154.5,341.9 148.3,343.4" fill="none" stroke="#00ffff"/><polygon points="110.9,329.9 113.5,336.0 108.9,338.2 106.2,331.9" fill="url(#hm)" stroke="#ff00ff"/><polygon points="102.3,329.5 109.6,326.6 111.0,332.3 104.5,334.9" fill="url(#hm)" stroke="#ff00ff"/><polygon points="143.4,342.9 145.1,346.2 139.9,349.0 138.2,345.5" fill="url(#hk)" stroke="#000"/><polygon points="136.5,256.2 143.0,253.9 143.3,257.1 137.5,259.2" fill="none" stroke="#00ffff"/><polygon points="140.2,297.9 145.5,295.5 148.5,299.7 142.3,302.5" fill="none" stroke="#ff00ff"/><polygon points="106.0,303.8 112.1,301.5 113.5,306.8 107.9,308.9" fill="url(#hk)" stroke="#000"/><polygon points="111.0,336.8 116.3,334.4 117.6,338.7 112.9,340.9" fill="none" stroke="#000"/><polygon points="151.4,259.3 155.7,258.2 156.7,261.1 152.2,262.2" fill="url(#hk)" stroke="#000"/><polygon points="112.3,321.2 115.9,328.3 112.2,329.9 108.6,323.1" fill="none" stroke="#ff00ff"/><polygon points="131.7,263.6 135.6,262.5 137.5,265.7 132.7,267.0" fill="none" stroke="#ff00ff"/><polygon points="133.2,346.6 137.1,345.3 137.6,348.6 134.3,349.8" fill="url(#hk)" stroke="#000"/><polygon points="134.9,334.0 136.2,339.0 130.3,339.5 129.3,335.4" fill="none" stroke="#000"/><polygon points="130.3,257.5 137.0,254.1 139.4,258.3 132.5,261.8" fill="url(#hm)" stroke="#ff00ff"/><polygon points="119.0,354.2 120.7,359.1 117.3,359.6 115.8,355.2" fill="none" stroke="#000"/><polygon points="148.5,331.2 150.1,336.5 146.9,337.3 145.4,332.1" fill="none" stroke="#000"/><polygon points="248.5,283.2 250.8,289.2 246.0,291.9 243.4,285.1" fill="url(#hc)" stroke="#00ffff"/><polygon points="204.0,297.7 210.7,295.5 211.7,301.4 205.8,303.3" fill="none" stroke="#000"/><polygon points="189.7,286.6 197.0,284.3 198.4,287.8 190.8,290.2" fill="url(#hm)" stroke="#ff00ff"/><polygon points="202.0,331.4 205.8,329.5 208.6,333.4 204.1,335.7" fill="url(#hm)" stroke="#ff00ff"/><polygon points="254.0,311.3 260.8,309.1 262.8,313.4 255.4,315.9" fill="url(#hk)" stroke="#000"/><polygon points="227.2,274.1 229.5,280.1 226.4,282.3 223.7,275.4" fill="url(#hc)" stroke="#00ffff"/><polygon points="192.9,325.4 199.5,322.1 201.8,327.6 195.6,330.7" fill="url(#hm)" stroke="#ff00ff"/><polygon points="192.0,275.8 198.3,273.6 199.8,278.4 193.7,280.6" fill="none" stroke="#00ffff"/><polygon points="249.2,340.3 255.7,336.9 258.8,341.5 251.8,345.2" fill="none" stroke="#000"/><polygon points="222.4,323.5 226.7,321.8 227.5,325.8 224.0,327.3" fill="none" stroke="#000"/><polygon points="238.3,340.4 245.1,339.0 245.9,344.8 239.6,346.2" fill="url(#hk)" stroke="#000"/><polygon points="187.0,285.0 193.9,282.1 196.8,287.7 189.4,290.8" fill="none" stroke="#ff00ff"/><polygon points="252.3,292.1 258.3,290.0 259.1,294.3 253.8,296.2" fill="none" stroke="#00ffff"/><polygon points="198.8,281.4 201.0,285.7 195.8,288.9 193.3,284.3" fill="url(#hg)" stroke="#00ff00"/><polygon points="226.8,319.0 228.6,325.4 223.1,326.4 221.4,320.5" fill="none" stroke="#000"/><polygon points="202.2,287.5 209.6,285.0 211.5,289.9 203.9,292.5" fill="url(#hc)" stroke="#00ffff"/><polygon points="196.3,270.8 197.8,274.0 194.0,275.9 192.4,272.7" fill="none" stroke="#0000ff"/><polygon points="209.2,328.9 213.2,327.2 214.9,330.1 210.6,331.9" fill="none" stroke="#000"/><polygon points="214.5,332.6 217.8,331.1 220.8,336.3 216.9,338.0" fill="url(#hc)" stroke="#00ffff"/><polygon points="186.6,282.6 193.9,280.4 195.2,283.7 187.7,286.0" fill="url(#hk)" stroke="#000"/><polygon points="221.0,316.6 223.7,322.0 220.7,324.4 217.6,318.3" fill="none" stroke="#000"/><polygon points="216.0,324.0 219.8,322.3 222.2,327.6 218.4,329.3" fill="url(#hk)" stroke="#000"/><polygon points="165.3,392.3 167.4,397.0 162.0,398.9 160.1,394.6" fill="url(#hk)" stroke="#000"/><polygon points="151.3,410.3 158.3,408.1 158.8,411.3 152.2,413.4" fill="url(#hk)" stroke="#000"/><polygon points="122.6,409.8 128.6,406.8 129.5,410.1 124.1,412.8" fill="url(#hk)" stroke="#000"/><polygon points="123.5,376.7 128.5,375.6 128.7,380.3 124.5,381.3" fill="none" stroke="#000"/><polygon points="146.1,441.7 153.1,438.2 155.8,443.6 148.8,447.0" fill="url(#hk)" stroke="#000"/><polygon points="125.7,389.9 127.9,397.3 123.4,398.5 121.3,391.2" fill="url(#hk)" stroke="#000"/><polygon points="158.8,398.9 160.2,402.7 153.8,404.0 152.7,401.1" fill="url(#hc)" stroke="#00ffff"/><polygon points="117.2,409.8 123.5,407.0 125.7,411.4 119.2,414.3" fill="url(#hc)" stroke="#00ffff"/><polygon points="162.4,437.9 164.6,442.6 159.1,445.4 156.8,440.6" fill="url(#hm)" stroke="#ff00ff"/><polygon points="141.2,382.3 145.3,380.9 146.9,386.3 143.0,387.6" fill="url(#hc)" stroke="#00ffff"/><polygon points="141.9,412.4 149.5,410.8 150.0,415.5 142.9,417.1" fill="url(#hm)" stroke="#ff00ff"/><polygon points="134.2,404.4 138.7,402.0 140.6,407.1 136.7,409.1" fill="url(#hm)" stroke="#ff00ff"/><polygon points="155.0,390.3 156.6,395.6 151.7,396.5 150.2,391.7" fill="none" stroke="#000"/><polygon points="129.9,380.5 131.3,386.2 126.3,386.9 125.1,381.7" fill="none" stroke="#000"/><polygon points="140.6,404.1 147.9,402.2 148.7,407.5 141.9,409.2" fill="url(#hb)" stroke="#0000ff"/><polygon points="131.2,394.7 138.5,391.9 141.3,397.3 133.4,400.4" fill="none" stroke="#ff00ff"/><polygon points="153.5,432.3 156.7,439.2 151.3,442.6 147.8,435.0" fill="url(#hc)" stroke="#00ffff"/><polygon points="155.2,392.2 159.5,390.7 160.1,395.0 156.6,396.2" fill="none" stroke="#ff00ff"/><polygon points="142.1,426.6 148.7,424.1 150.2,426.8 143.1,429.4" fill="url(#hc)" stroke="#00ffff"/><polygon points="128.5,407.1 135.8,404.3 137.9,407.5 129.9,410.6" fill="none" stroke="#000"/><polygon points="235.9,30.7 238.8,37.0 235.5,38.0 232.8,32.1" fill="url(#hk)" stroke="#000"/><polygon points="234.7,22.8 238.5,21.9 239.3,26.9 235.9,27.7" fill="url(#hc)" stroke="#00ffff"/><polygon points="227.5,25.6 230.7,24.1 233.9,28.5 229.8,30.5" fill="none" stroke="#ff00ff"/><polygon points="228.0,37.4 232.7,36.1 234.4,39.7 229.0,41.2" fill="none" stroke="#ff00ff"/><polygon points="232.3,4.8 234.7,10.2 229.2,11.5 227.2,7.0" fill="none" stroke="#000"/><polygon points="228.7,36.8 235.8,33.3 238.0,35.7 230.1,39.6" fill="url(#hk)" stroke="#000"/><polygon points="241.7,17.4 243.9,22.3 239.3,23.5 237.4,19.3" fill="url(#hk)" stroke="#000"/><polygon points="240.7,33.8 245.2,32.4 246.8,38.0 242.3,39.3" fill="none" stroke="#000"/><polygon points="226.1,34.3 230.9,32.1 233.7,36.9 228.4,39.3" fill="none" stroke="#000"/><polygon points="231.9,31.9 234.8,38.4 229.7,41.0 226.6,34.3" fill="url(#hc)" stroke="#00ffff"/><polygon points="289.9,467.5 291.5,471.2 286.7,473.2 285.1,469.7" fill="none" stroke="#00ffff"/><polygon points="270.2,482.0 274.5,480.6 275.9,484.3 271.4,485.8" fill="url(#hm)" stroke="#ff00ff"/><polygon points="291.9,430.0 296.2,428.8 298.6,434.1 293.3,435.5" fill="url(#hm)" stroke="#ff00ff"/><polygon points="301.4,480.1 303.1,483.4 298.5,485.8 296.8,482.4" fill="none" stroke="#000"/><polygon points="285.2,427.6 290.5,425.4 292.4,429.9 287.0,432.1" fill="url(#hm)" stroke="#ff00ff"/><polygon points="277.7,449.5 279.4,455.0 275.5,455.8 274.0,450.7" fill="none" stroke="#000"/><polygon points="276.2,458.7 281.9,455.8 284.4,458.9 278.1,462.2" fill="url(#hk)" stroke="#000"/><polygon points="280.1,450.2 281.9,453.7 276.4,457.1 274.4,453.2" fill="url(#hk)" stroke="#000"/><polygon points="304.0,425.6 306.0,429.7 300.5,433.0 298.2,428.4" fill="none" stroke="#ff00ff"/><polygon points="310.4,482.3 316.6,479.4 317.3,482.9 311.8,485.4" fill="url(#hm)" stroke="#ff00ff"/><polygon points="296.5,433.1 302.7,430.2 305.1,433.7 298.3,436.9" fill="none" stroke="#ff00ff"/><polygon points="323.3,497.9 330.9,496.0 331.5,500.1 324.4,501.9" fill="url(#hk)" stroke="#000"/><polygon points="301.1,450.7 305.0,449.7 306.2,453.4 302.0,454.4" fill="none" stroke="#ff00ff"/><polygon points="335.2,485.2 342.0,483.0 343.8,486.5 336.3,488.9" fill="url(#hk)" stroke="#000"/><polygon points="298.8,489.6 303.7,488.3 304.4,494.3 300.3,495.4" fill="none" stroke="#ff00ff"/><polygon points="331.6,474.5 335.1,473.3 336.8,479.1 333.6,480.2" fill="none" stroke="#ff00ff"/><polygon points="349.5,436.7 354.0,434.4 354.9,438.3 351.2,440.1" fill="url(#hm)" stroke="#ff00ff"/><polygon points="309.4,452.6 315.9,449.9 319.1,455.4 311.9,458.5" fill="none" stroke="#000"/><polygon points="209.6,320.4 216.2,317.1 219.1,321.3 211.8,324.9" fill="url(#hk)" stroke="#000"/><polygon points="191.3,371.7 197.3,369.3 199.5,372.4 192.7,375.2" fill="url(#hc)" stroke="#00ffff"/><polygon points="201.4,331.4 207.5,328.4 210.0,332.1 203.4,335.4" fill="url(#hm)" stroke="#ff00ff"/><polygon points="179.4,359.1 186.3,357.4 187.1,361.0 180.3,362.7" fill="none" stroke="#000"/><polygon points="227.1,308.2 228.5,312.9 224.5,314.2 223.1,309.4" fill="none" stroke="#000"/><polygon points="179.9,374.6 182.0,382.3 177.5,384.4 175.1,375.9" fill="none" stroke="#00ffff"/><polygon points="217.9,325.7 224.6,322.1 227.1,325.1 219.6,329.0" fill="none" stroke="#ff00ff"/><polygon points="197.2,376.2 203.0,374.3 203.9,377.7 198.3,379.5" fill="url(#hc)" stroke="#00ffff"/><polygon points="187.3,327.2 189.9,332.4 185.6,334.2 183.2,329.3" fill="none" stroke="#00ffff"/><polygon points="180.9,315.2 186.4,313.4 187.0,317.0 182.0,318.6" fill="none" stroke="#00ffff"/><polygon points="211.2,356.0 217.7,354.3 217.8,358.4 212.2,359.8" fill="url(#hb)" stroke="#0000ff"/><polygon points="170.8,298.4 177.2,295.3 179.8,300.0 173.2,303.2" fill="url(#hg)" stroke="#00ff00"/><polygon points="255.3,4.0 276.3,19.7 266.3,24.4 256.9,22.8 251.2,11.8" fill="url(#hk)" stroke="#000"/><polygon points="220.8,14.4 226.1,15.6 219.8,43.2 213.5,41.7" fill="url(#hk)" stroke="#000"/><polygon points="274.1,44.8 288.3,43.2 290.8,87.2 280.4,99.8 274.1,98.2 258.4,65.2" fill="url(#hk)" stroke="#000"/><polygon points="275.1,42.8 289.3,42.2 291.8,87.2 281.4,101.8 273.1,99.2 257.4,66.2" fill="none" stroke="#ff00ff"/><polygon points="199.8,44.8 201.3,45.5 192.4,73.5 190.9,73.0" fill="url(#hk)" stroke="#000"/><polygon points="241.2,26.0 255.3,24.4 258.4,32.2 245.9,38.5" fill="url(#hm)" stroke="#ff00ff"/><polygon points="260.0,38.5 269.4,37.0 274.1,46.4 265.7,51.0" fill="url(#hc)" stroke="#00ffff"/><polygon points="250.6,41.7 258.4,39.5 260.6,47.0 253.1,50.1" fill="url(#hm)" stroke="#ff00ff"/><polygon points="228.6,126.4 238.0,124.9 241.2,139.0 231.8,141.2" fill="url(#hk)" stroke="#000"/><polygon points="209.8,153.1 225.5,150.0 228.6,162.5 214.5,167.2" fill="url(#hk)" stroke="#000"/><polygon points="263.2,134.3 278.8,140.6 272.6,156.3 256.9,150.0" fill="url(#hc)" stroke="#00ffff"/><polygon points="190.9,187.7 200.4,184.5 206.6,197.1 195.7,201.8" fill="url(#hc)" stroke="#00ffff"/><polygon points="244.3,178.2 263.2,172.0 266.3,181.4 247.5,187.7" fill="url(#hc)" stroke="#00ffff"/><polygon points="216.0,181.4 230.2,178.2 233.3,190.8 220.8,195.5" fill="url(#hk)" stroke="#000"/><polygon points="263.2,197.1 274.1,198.7 272.6,212.8 261.6,214.4" fill="url(#hk)" stroke="#000"/><polygon points="274.1,209.6 300.8,212.8 296.1,222.2 282.0,219.1" fill="url(#hm)" stroke="#ff00ff"/><polygon points="304.0,212.8 322.8,219.1 329.1,226.9 307.1,222.2" fill="url(#hm)" stroke="#ff00ff"/><polygon points="324.4,200.2 333.8,203.4 333.8,225.3 327.5,226.9" fill="url(#hk)" stroke="#000"/><polygon points="228.6,236.3 252.2,259.9 241.2,263.0 222.3,244.2" fill="url(#hm)" stroke="#ff00ff"/><polygon points="250.6,225.3 266.3,234.8 291.4,250.5 285.1,263.0 266.3,263.0 241.2,234.8" fill="url(#hk)" stroke="#000"/><polygon points="223.9,243.0 260.0,249.3 258.4,265.0 241.2,258.7" fill="url(#hm)" stroke="#ff00ff"/><polygon points="260.0,243.0 318.1,265.0 311.8,285.4 285.1,274.4 263.2,258.7" fill="url(#hk)" stroke="#000"/><polygon points="272.6,276.0 305.5,287.0 296.1,326.2 260.0,316.8" fill="url(#hk)" stroke="#000"/><polygon points="137.6,269.7 156.4,268.1 165.8,283.8 143.8,287.0" fill="url(#hk)" stroke="#000"/><polygon points="156.4,271.3 173.7,268.1 172.1,285.4 161.1,287.0" fill="url(#hc)" stroke="#00ffff"/><polygon points="216.0,282.2 231.8,280.7 236.5,294.8 222.3,299.5" fill="url(#hm)" stroke="#ff00ff"/><polygon points="164.3,305.8 181.5,307.4 178.4,323.0 169.0,319.9" fill="url(#hk)" stroke="#000"/><polygon points="147.0,321.5 159.5,318.4 165.8,330.9 153.3,337.2" fill="url(#hm)" stroke="#ff00ff"/><polygon points="142.3,349.8 172.1,338.8 180.0,349.8 169.0,385.9 161.1,387.4" fill="url(#hm)" stroke="#ff00ff"/><polygon points="241.2,319.9 266.3,327.8 263.2,340.3 228.6,337.2" fill="url(#hc)" stroke="#00ffff"/><polygon points="256.9,349.8 272.6,351.3 267.9,370.2 253.7,368.6" fill="url(#hc)" stroke="#00ffff"/><polygon points="118.7,349.8 136.0,356.0 134.4,368.6 121.9,367.0" fill="url(#hc)" stroke="#00ffff"/><polygon points="95.2,371.7 115.6,376.4 125.0,390.6 110.9,433.0 84.2,423.5 87.3,393.7" fill="url(#hk)" stroke="#000"/><polygon points="84.2,425.1 110.9,434.5 109.3,445.5 82.6,437.7" fill="url(#hg)" stroke="#00ff00"/><polygon points="172.1,384.3 200.4,389.0 195.7,407.8 169.0,400.0" fill="url(#hk)" stroke="#000"/><polygon points="203.5,390.6 225.5,396.9 209.8,407.8 198.8,406.3" fill="url(#hk)" stroke="#000"/><polygon points="236.5,379.6 269.4,390.6 264.7,406.3 231.8,393.7" fill="url(#hm)" stroke="#ff00ff"/><polygon points="128.1,418.8 143.8,422.0 140.7,450.2 120.3,447.1" fill="url(#hc)" stroke="#00ffff"/><polygon points="176.8,431.4 197.2,434.5 192.5,447.1 173.7,442.4" fill="url(#hk)" stroke="#000"/><polygon points="212.9,428.2 231.8,418.8 250.6,428.2 228.6,459.6 198.8,447.1 203.5,431.4" fill="url(#hc)" stroke="#00ffff"/><polygon points="223.9,443.9 239.6,447.1 234.9,462.8 220.8,459.6" fill="url(#hk)" stroke="#000"/><polygon points="272.6,423.5 285.1,425.1 282.0,443.9 269.4,440.8" fill="url(#hk)" stroke="#000"/><polygon points="285.1,431.4 302.4,434.5 296.1,447.1 282.0,443.9" fill="url(#hc)" stroke="#00ffff"/><polygon points="296.1,451.8 315.0,456.5 307.1,483.2 289.8,476.9" fill="url(#hc)" stroke="#00ffff"/><polygon points="329.1,426.7 351.1,431.4 341.7,465.9 319.7,459.6" fill="url(#hk)" stroke="#000"/><polygon points="351.1,440.8 362.1,443.9 357.4,458.1 347.9,456.5" fill="url(#hk)" stroke="#000"/><polygon points="344.8,458.1 357.4,459.6 347.9,492.6 338.5,489.5" fill="url(#hc)" stroke="#00ffff"/><polygon points="307.1,486.3 322.8,491.0 319.7,505.2 300.8,498.9" fill="url(#hk)" stroke="#000"/><polygon points="332.2,497.3 344.8,498.9 340.1,513.0 329.1,509.9" fill="url(#hc)" stroke="#00ffff"/><polygon points="255.3,476.9 264.7,478.5 261.6,492.6 253.1,491.0" fill="url(#hk)" stroke="#000"/><polygon points="206.6,464.4 225.5,467.5 222.3,480.1 209.8,476.9" fill="url(#hk)" stroke="#000"/><polygon points="199.7,158.4 222.3,148.5 228.0,158.4 205.4,169.7" fill="url(#hc)" stroke="#00ffff"/><polygon points="256.3,151.3 269.0,151.3 274.7,156.9 263.4,158.4" fill="url(#hk)" stroke="#000"/><polygon points="257.7,155.5 266.2,158.4 267.6,165.4 263.4,166.8" fill="none" stroke="#00ff00"/><polygon points="243.6,163.3 249.9,161.2 253.5,172.5 247.8,175.3" fill="url(#hm)" stroke="#ff00ff"/><polygon points="187.7,182.4 196.2,179.6 200.4,189.5 192.6,190.9" fill="none" stroke="#00ff00"/><polygon points="182.0,166.1 191.2,164.0 193.3,176.7 185.6,179.6" fill="none" stroke="#00ff00"/><polygon points="273.3,199.4 283.2,202.2 287.4,213.5 273.3,209.3" fill="url(#hk)" stroke="#000"/><polygon points="300.1,195.8 304.4,195.8 298.7,222.0 294.5,222.0" fill="url(#hk)" stroke="#000"/><polygon points="291.6,172.5 305.8,174.6 306.5,179.6 293.0,177.5" fill="url(#hk)" stroke="#000"/><polygon points="250.6,219.2 261.9,219.2 261.9,224.1 250.6,224.1" fill="url(#hk)" stroke="#000"/><polygon points="189.8,224.8 202.5,222.0 204.7,230.5 192.6,234.7" fill="url(#hk)" stroke="#000"/><polygon points="203.9,222.0 215.3,220.6 216.7,227.7 206.8,230.5" fill="url(#hk)" stroke="#000"/><polygon points="194.8,236.2 215.3,243.2 215.3,248.9 195.5,241.8" fill="url(#hk)" stroke="#000"/><polygon points="175.7,227.7 188.4,224.8 188.4,230.5 184.1,234.7" fill="none" stroke="#ff00ff"/><polygon points="179.9,241.8 188.4,240.4 189.8,250.3 182.7,253.1" fill="none" stroke="#00ff00"/><polygon points="311.0,152.0 321.0,150.0 324.0,161.0 314.0,164.0" fill="url(#hc)" stroke="#00ffff"/><polygon points="323.0,155.0 333.0,153.0 333.0,165.0 326.0,167.0" fill="url(#hc)" stroke="#00ffff"/><polygon points="313.0,167.0 324.0,165.0 327.0,176.0 316.0,179.0" fill="url(#hc)" stroke="#00ffff"/><polygon points="326.0,169.0 333.0,168.0 333.0,181.0 328.0,182.0" fill="url(#hc)" stroke="#00ffff"/><polygon points="310.0,181.0 320.0,179.0 323.0,189.0 313.0,191.0" fill="url(#hc)" stroke="#00ffff"/><polygon points="298.0,146.0 306.0,144.0 308.0,153.0 300.0,155.0" fill="url(#hb)" stroke="#0000ff"/><polygon points="300.0,154.0 308.0,152.0 309.0,160.0 302.0,161.0" fill="url(#hb)" stroke="#0000ff"/><polygon points="276.0,180.0 290.0,184.0 288.0,195.0 275.0,191.0" fill="url(#hm)" stroke="#ff00ff"/><polygon points="290.0,186.0 302.0,189.0 300.0,197.0 289.0,195.0" fill="url(#hm)" stroke="#ff00ff"/><rect x="331" y="252" width="2" height="2" fill="#000"/><rect x="322" y="266" width="2" height="2" fill="#000"/><rect x="311" y="340" width="2" height="2" fill="#000"/><rect x="282" y="349" width="2" height="2" fill="#000"/><rect x="288" y="353" width="2" height="2" fill="#000"/><rect x="234" y="365" width="2" height="2" fill="#000"/><rect x="223" y="375" width="2" height="2" fill="#000"/><rect x="227" y="386" width="2" height="2" fill="#000"/><rect x="84" y="389" width="2" height="2" fill="#000"/><rect x="248" y="472" width="2" height="2" fill="#000"/><rect x="275" y="500" width="2" height="2" fill="#000"/><rect x="264" y="433" width="2" height="2" fill="#000"/><rect x="250" y="453" width="2" height="2" fill="#000"/><rect x="316" y="415" width="2" height="2" fill="#000"/><rect x="204" y="319" width="2" height="2" fill="#000"/><rect x="196" y="293" width="2" height="2" fill="#000"/><rect x="158" y="280" width="2" height="2" fill="#000"/></g></svg><div style="left:4px;top:601px;width:795px;height:19px;background:#ece9d8;border-top:1px solid #aca899;box-shadow:inset 0 1px #fff"></div><span class="th" style="left:5.5px;top:605px;">20 240 m, 22 780 m</span><div style="left:152px;top:604px;width:1px;height:15px;background:#aca899"></div><div style="left:153px;top:604px;width:1px;height:15px;background:#fff"></div><span class="th" style="left:157px;top:605px;">Изменяемый: Строения</span><div style="left:352px;top:604px;width:1px;height:15px;background:#aca899"></div><div style="left:353px;top:604px;width:1px;height:15px;background:#fff"></div><span class="th" style="left:357.5px;top:605px;">Выбранный: НЕТ</span><svg style="left:786px;top:607px;" width="12" height="12" viewBox="0 0 12 12"><path d="M10 2h2v2h-2zM6 6h2v2H6zM10 6h2v2h-2zM2 10h2v2H2zM6 10h2v2H6zM10 10h2v2h-2z" fill="#b8b4a2"/></svg></div><div style="left:704px;top:402px;width:455px;height:408px;background:#0a4fd8;box-shadow:inset 1px 1px #0831d9,inset -1px -1px #00138c"><div style="left:0px;top:0px;width:455px;height:21px;background:linear-gradient(#0a5fe8,#0b62ee 30%,#0a5ce0 60%,#0b57d8 85%,#0a4fc8)"></div><span class="n" style="left:3px;top:4.5px;color:#fff;font-weight:bold;font-size:12px;letter-spacing:0;line-height:15px">Пересчет системы координат</span><div style="left:437px;top:5px;width:13px;height:13px;border:1px solid #fff;border-radius:2px;background:linear-gradient(135deg,#e8906c,#c84818)"><svg style="left:0;top:0" width="11" height="11"><path d="M2.500 2.500l6 6M8.500 2.500l-6 6" stroke="#fff" stroke-width="1.700"/></svg></div><div style="left:3px;top:21px;width:449px;height:384px;background:#ece9d8"></div><span class="t" style="left:21px;top:36.5px;">Текущие координаты</span><span class="t" style="left:21px;top:49px;">точек</span><span class="t" style="left:166.5px;top:36.5px;">Новые координаты</span><span class="t" style="left:166.5px;top:49px;">точек</span><div style="left:11px;top:75px;width:281px;height:83px;border:1px solid #d0d0bf;border-radius:4px"></div><span class="t" style="left:18px;top:68.5px;background:#ece9d8;color:#0046d5;padding:0 2px">Точка № 1</span><div style="left:11px;top:195px;width:281px;height:83px;border:1px solid #d0d0bf;border-radius:4px"></div><span class="t" style="left:18px;top:188.5px;background:#ece9d8;color:#0046d5;padding:0 2px">Точка № 2</span><div class="inp" style="left:19px;top:91px;width:121px;height:21px;"></div><div class="inp" style="left:163px;top:91px;width:121px;height:21px;"></div><div class="inp" style="left:19px;top:121px;width:121px;height:21px;"></div><div class="inp" style="left:163px;top:121px;width:121px;height:21px;"></div><div class="inp" style="left:19px;top:211px;width:121px;height:21px;"></div><div class="inp" style="left:163px;top:211px;width:121px;height:21px;"></div><div class="inp" style="left:19px;top:241px;width:121px;height:21px;"></div><div class="inp" style="left:163px;top:241px;width:121px;height:21px;"></div><span class="n" style="left:147.5px;top:94px;font-weight:bold;font-size:12px;letter-spacing:0">Y</span><span class="n" style="left:147.5px;top:124px;font-weight:bold;font-size:12px;letter-spacing:0">X</span><span class="n" style="left:147.5px;top:214px;font-weight:bold;font-size:12px;letter-spacing:0">Y</span><span class="n" style="left:147.5px;top:244px;font-weight:bold;font-size:12px;letter-spacing:0">X</span><div class="inp" style="left:317px;top:212px;width:107px;height:21px;"></div><div class="inp" style="left:317px;top:242px;width:108px;height:21px;"></div><span class="n" style="left:302px;top:214px;font-size:12px;letter-spacing:0">Z</span><span class="n" style="left:298px;top:245px;font-weight:bold;font-size:12px;letter-spacing:0">A</span><span class="n" style="left:306px;top:241px;font-weight:bold;font-size:9px;letter-spacing:0">0</span><span class="t" style="left:44.5px;top:169.5px;">F3 - координаты с курсора карты MapInfo</span><div style="left:11px;top:282px;width:423px;height:74px;border:1px solid;border-color:#aca899 #fff #fff #aca899"></div><span class="t" style="left:19.5px;top:286.5px;">Угол поворота сетки коорд.(Р)</span><span class="t" style="left:177.5px;top:287.5px;">0</span><span class="t" style="left:19.5px;top:301.9px;">Угол поворота сетки коорд.</span><span class="t" style="left:177.5px;top:301.9px;">0</span><span class="t" style="left:19.5px;top:317.29999999999995px;">Масштабны коэффициент</span><span class="t" style="left:177.5px;top:317.29999999999995px;">0</span><span class="t" style="left:19.5px;top:332.70000000000005px;">Коорд. центра новой системы</span><span class="t" style="left:177.5px;top:332.70000000000005px;">0</span><div class="btn" style="left:312px;top:90px;width:115px;height:26px;"><span class="t" style="top:6px">Для квартала !</span></div><div class="btn" style="left:14px;top:370px;width:73px;height:23px;box-shadow:inset 0 0 0 2px #a8c0f0"><span class="t" style="top:4px">Параметры</span></div><div class="btn" style="left:116px;top:370px;width:73px;height:23px;"><span class="t" style="top:4px">Отмена</span></div><div class="btn" style="left:217px;top:370px;width:73px;height:23px;"><span class="t" style="top:4px">Пересчет</span></div><div class="btn" style="left:313px;top:370px;width:114px;height:23px;"><span class="t" style="top:4px">Пересчет файлов</span></div></div></body></html>
